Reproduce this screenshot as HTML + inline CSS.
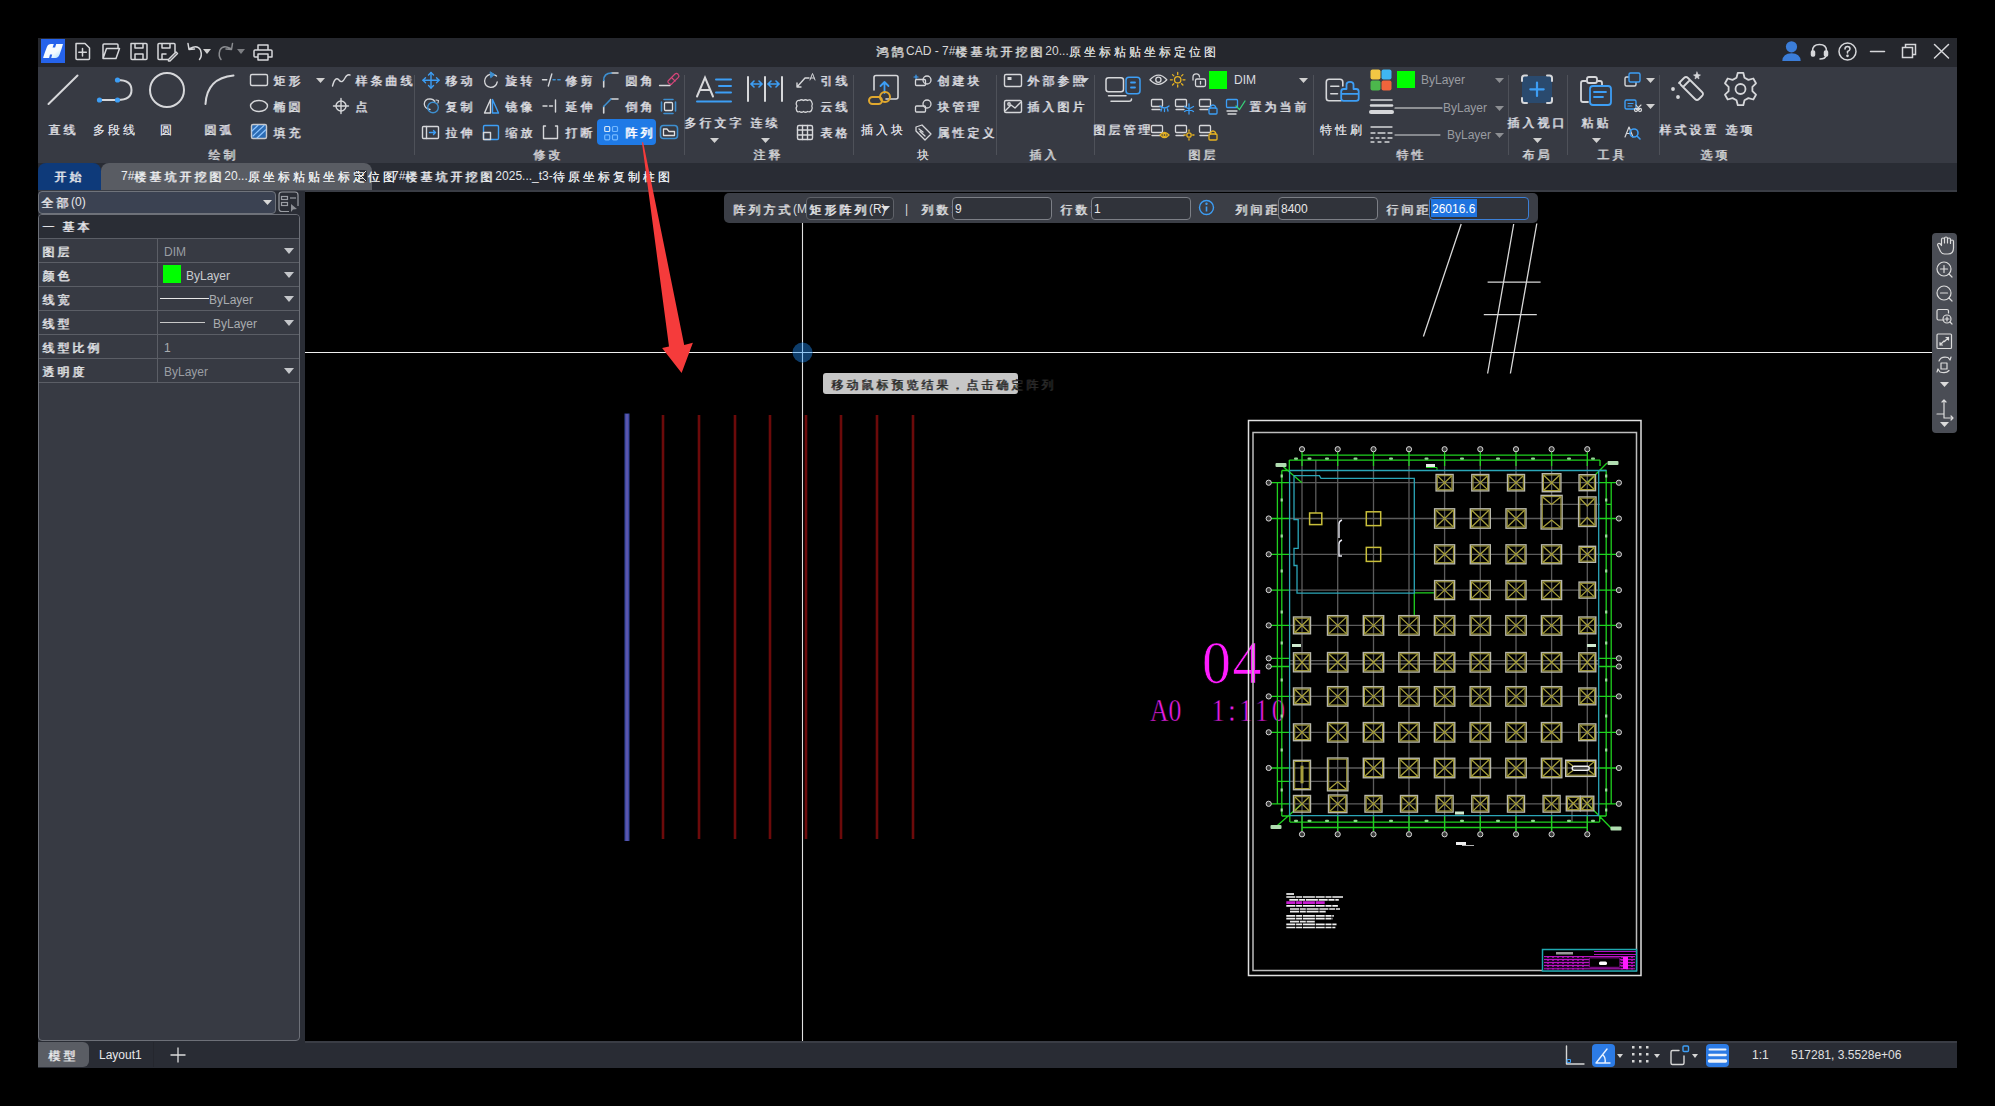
<!DOCTYPE html>
<html><head><meta charset="utf-8">
<style>
*{margin:0;padding:0;box-sizing:border-box}
html,body{width:1995px;height:1106px;background:#000;overflow:hidden;font-family:"Liberation Sans",sans-serif;color:#d4d6da;font-size:12px}
.a{position:absolute}
.t{position:absolute;white-space:nowrap;font-size:12px}
.cj{position:relative;top:1px;text-shadow:0.6px 0 0 currentColor}
svg{position:absolute;overflow:visible}
</style></head><body>
<div class="a" style="left:38px;top:38px;width:1919px;height:29px;background:#25272d;"></div>
<svg style="left:41px;top:39px" width="24" height="24" viewBox="0 0 24 24"><defs><linearGradient id="lg" x1="0" y1="0" x2="1" y2="1"><stop offset="0" stop-color="#ffffff"/><stop offset="0.6" stop-color="#f2fbff"/><stop offset="1" stop-color="#9fdcff"/></linearGradient></defs><rect width="24" height="24" fill="#2563eb"/><path d="M2.2 18.6 Q3.5 14 5.8 8.2 Q7 5 10 5 H12.8 L11.6 8.6 H14.1 L15.2 5 H22 Q20.5 10.5 18.6 15.6 Q17.4 19 14.5 19 H10.2 L11.2 15.6 H9 L8.1 19 H2.2Z" fill="url(#lg)"/></svg>
<svg style="left:70px;top:40px" width="210" height="24" viewBox="70 40 210 24" fill="none" stroke="#d6d7da" stroke-width="1.5" stroke-linejoin="round" stroke-linecap="round">
<path d="M76 43.5 H85 L89.5 48 V58.5 Q89.5 59.5 88.5 59.5 H77 Q76 59.5 76 58.5 V44.5 Q76 43.5 77 43.5Z"/><path d="M82.5 48.5 V56 M78.8 52.2 H86.3"/>
<path d="M103 58.5 V45 Q103 44 104 44 H117 Q118 44 118 45 V48 M103 58.5 L106.5 48.5 H119.5 L116 58.5 Z"/>
<path d="M131 43.5 H146 Q147 43.5 147 44.5 V58.5 Q147 59.5 146 59.5 H132 Q131 59.5 131 58.5Z M135 43.5 V48 H143 V43.5 M135 59.5 V54 H143 V59.5"/>
<path d="M168 59.5 H159 Q158 59.5 158 58.5 V44.5 Q158 43.5 159 43.5 H174 Q175 43.5 175 44.5 V52 M162 43.5 V48 H170 V43.5 M162 59.5 V54 H166"/><path d="M168.5 59.5 L176 52 L177.5 53.5 L170 61 H168.5Z"/>
<path d="M199.5 59.5 Q202.5 56 200.5 50 Q197.5 44.5 190 48.5 M188 43.5 L189 49.5 L194.5 49"/>
<path d="M221 59.5 Q218 56 220 50 Q223 44.5 230.5 48.5 M232.5 43.5 L231.5 49.5 L226 49" stroke="#8a8c90"/>
<path d="M258 50 V45 H268 V50 M255 50 H271 Q272 50 272 51 V57 H268 M258 57 H255 Q254 57 254 56 V51 Q254 50 255 50 M258 54 H268 V60 H258Z"/>
</svg>
<svg style="left:203.0px;top:48.5px" width="8" height="5" viewBox="0 0 8 5"><path d="M0 0H8L4.0 5Z" fill="#d0d0d0"/></svg>
<svg style="left:237.0px;top:48.5px" width="8" height="5" viewBox="0 0 8 5"><path d="M0 0H8L4.0 5Z" fill="#7d7f83"/></svg>
<div class="t" style="left:876px;width:300px;text-align:center;top:43.0px;line-height:16px;font-size:12px;color:#d8d8d8;"><span class="cj" style="letter-spacing:3px">鸿鹄</span>CAD - 7#<span class="cj" style="letter-spacing:3px">楼基坑开挖图</span>20...<span class="cj" style="letter-spacing:3px">原坐标粘贴坐标定位图</span></div>
<svg style="left:1780px;top:40px" width="175" height="24" viewBox="1780 40 175 24" fill="none" stroke="#d6d7da" stroke-width="1.5" stroke-linecap="round">
<circle cx="1791.5" cy="46.8" r="5.6" fill="#3b7dd8" stroke="none"/><path d="M1782.3 61 Q1782.8 53.3 1791.5 53.3 Q1800.2 53.3 1800.7 61Z" fill="#3b7dd8" stroke="none"/>
<path d="M1812.5 54 V51 Q1812.5 44.5 1819.5 44.5 Q1826.5 44.5 1826.5 51 V54"/><rect x="1811.5" y="51" width="3" height="5" rx="1" fill="#d6d7da"/><rect x="1824.5" y="51" width="3" height="5" rx="1" fill="#d6d7da"/><path d="M1826 56 Q1825 59 1820 59"/>
<circle cx="1847.5" cy="51.5" r="8.5"/><path d="M1845 49 Q1845 46.5 1847.5 46.5 Q1850 46.5 1850 49 Q1850 50.5 1847.5 51.5 V53"/><circle cx="1847.5" cy="55.8" r="0.6" fill="#d6d7da"/>
<path d="M1870.5 51.5 H1884.5"/>
<path d="M1902.5 47.5 H1912.5 V57.5 H1902.5Z M1905.5 47.5 V44.5 H1915.5 V54.5 H1912.5"/>
<path d="M1934.5 44.5 L1948.5 58 M1948.5 44.5 L1934.5 58"/>
</svg>
<div class="a" style="left:38px;top:67px;width:1919px;height:96px;background:#373a43;"></div>
<svg style="left:38px;top:67px" width="380" height="50" viewBox="38 67 380 50" fill="none" stroke="#d6d7da" stroke-width="2" stroke-linecap="round">
<path d="M48.5 104 L77.5 75.5"/>
<path d="M99.5 100 H117.5 Q131.5 100 131.5 90 Q131.5 80 117.5 80"/>
<circle cx="99.5" cy="100" r="2.6" fill="#3d9ef5" stroke="none"/><circle cx="117.5" cy="100" r="2.6" fill="#3d9ef5" stroke="none"/><circle cx="117.5" cy="80" r="2.6" fill="#3d9ef5" stroke="none"/>
<circle cx="167" cy="90" r="17"/>
<path d="M205.5 104 Q207 78 233.5 75.5"/>
</svg>
<div class="t" style="left:-87px;width:300px;text-align:center;top:121.0px;line-height:16px;font-size:12px;color:#dcdde0;"><span class="cj" style="letter-spacing:3px">直线</span></div>
<div class="t" style="left:-35px;width:300px;text-align:center;top:121.0px;line-height:16px;font-size:12px;color:#dcdde0;"><span class="cj" style="letter-spacing:3px">多段线</span></div>
<div class="t" style="left:17px;width:300px;text-align:center;top:121.0px;line-height:16px;font-size:12px;color:#dcdde0;"><span class="cj" style="letter-spacing:3px">圆</span></div>
<div class="t" style="left:69px;width:300px;text-align:center;top:121.0px;line-height:16px;font-size:12px;color:#dcdde0;"><span class="cj" style="letter-spacing:3px">圆弧</span></div>
<svg style="left:245px;top:70px" width="110" height="70" viewBox="245 70 110 70" fill="none" stroke="#d6d7da" stroke-width="1.4" stroke-linecap="round" stroke-linejoin="round">
<rect x="250.5" y="74.5" width="17" height="11" rx="1.5"/>
<ellipse cx="259" cy="106" rx="8.5" ry="5.5"/>
<rect x="251.5" y="124.5" width="15" height="14" rx="1.5" stroke="#c7c8cb" fill="#2b6bb3"/>
<path d="M253 136 L264 125.5 M257 138 L265.5 130 M252 131 L258 125.3" stroke="#8fc5ff" stroke-width="1.2"/>
<path d="M332.5 86 Q335 76 339 80 Q342 84 345 78 Q347 74 350 75"/>
<circle cx="341" cy="106" r="5"/><path d="M341 98.5 V113.5 M333.5 106 H348.5"/>
</svg>
<div class="t" style="left:273px;top:72.0px;line-height:16px;font-size:12px;color:#dcdde0;"><span class="cj" style="letter-spacing:3px">矩形</span></div>
<div class="t" style="left:273px;top:98.0px;line-height:16px;font-size:12px;color:#dcdde0;"><span class="cj" style="letter-spacing:3px">椭圆</span></div>
<div class="t" style="left:273px;top:124.0px;line-height:16px;font-size:12px;color:#dcdde0;"><span class="cj" style="letter-spacing:3px">填充</span></div>
<svg style="left:315.5px;top:77.5px" width="9" height="5" viewBox="0 0 9 5"><path d="M0 0H9L4.5 5Z" fill="#d0d0d0"/></svg>
<div class="t" style="left:355px;top:72.0px;line-height:16px;font-size:12px;color:#dcdde0;"><span class="cj" style="letter-spacing:3px">样条曲线</span></div>
<div class="t" style="left:355px;top:98.0px;line-height:16px;font-size:12px;color:#dcdde0;"><span class="cj" style="letter-spacing:3px">点</span></div>
<div class="t" style="left:73px;width:300px;text-align:center;top:146.0px;line-height:16px;font-size:12px;color:#d0d1d4;"><span class="cj" style="letter-spacing:3px">绘制</span></div>
<div class="a" style="left:414px;top:75px;width:1px;height:80px;background:#4e5159;"></div>
<div class="a" style="left:597px;top:119px;width:59px;height:26px;background:#1f7ae6;border-radius:4px"></div>
<svg style="left:418px;top:70px" width="265" height="72" viewBox="418 70 265 72" fill="none" stroke="#d6d7da" stroke-width="1.4" stroke-linecap="round" stroke-linejoin="round">
<path d="M431 72.5 V88 M423 80.3 H439" stroke="#3d9ef5"/><path d="M428.5 75 L431 72.5 L433.5 75 M428.5 85.5 L431 88 L433.5 85.5 M425.5 77.8 L423 80.3 L425.5 82.8 M436.5 77.8 L439 80.3 L436.5 82.8" stroke="#3d9ef5"/>
<path d="M496.5 76 Q493.5 73.5 490 74.3 Q485 75.8 484.6 81 Q484.8 86.5 490.5 87.3 Q496 87.5 497.2 82" stroke="#d6d7da" stroke-width="1.3"/><path d="M490.5 72 L494.5 74.5 L491 77.5Z" fill="#3d8fd0" stroke="#3d8fd0" stroke-width="1"/>
<path d="M542.5 79.8 H546.8 M548.3 86 L551.8 74" stroke="#d6d7da" stroke-width="1.4"/><path d="M553 79.8 H555.2 M557.8 79.8 H560.2" stroke="#3d8fd0" stroke-width="1.4"/>
<path d="M603.7 87 V80.5 M611.5 73 H618" stroke="#d6d7da" stroke-width="1.6"/><path d="M603.7 80.5 Q603.7 73 611.5 73" stroke="#3d8fd0" stroke-width="1.6"/>
<path d="M659.5 85.5 H670" stroke="#d6d7da" stroke-width="1.3"/><path d="M668.5 80.5 L675 74 Q676.5 72.8 677.8 74 L678.5 74.8 Q679.6 76 678.4 77.3 L672 83.7 Q670.6 85 669.3 83.7 L668.5 82.9 Q667.3 81.6 668.5 80.5Z M671.5 77.5 L675.2 81.2" stroke="#d8457a" stroke-width="1.2"/>
<path d="M430 109.5 Q424.5 108.5 424.3 104 Q424.5 98.8 430 98.8 Q433.5 99 434.8 101.5" stroke="#d6d7da" stroke-width="1.3"/><circle cx="433" cy="107.5" r="5.3" stroke="#3d8fd0" stroke-width="1.4"/><path d="M436 100 L438.5 100.5 L438 103" stroke="#d6d7da" stroke-width="1.1"/>
<path d="M484.5 113 L490.5 99.5 V113Z"/><path d="M492.5 113 V99.5 L498.5 113Z" stroke="#3d9ef5"/>
<path d="M543 106 H547 M549.5 106 H552.5 M555.5 100 V112"/>
<path d="M603.7 113 V106.5 M611 99 H618" stroke="#d6d7da" stroke-width="1.6"/><path d="M603.7 106.5 L611 99" stroke="#3d8fd0" stroke-width="1.6"/>
<rect x="664.5" y="102.5" width="8" height="8" rx="1" stroke="#e0e0e0" stroke-width="1.3"/><path d="M661.5 102 V111 M675.5 102 V111 M664 99.5 H673 M664 113.5 H673" stroke="#3d8fd0" stroke-width="1.6"/>
<rect x="422.5" y="126.5" width="16" height="12" rx="1"/><path d="M426.5 126.5 V138.5" stroke="#d6d7da"/><path d="M429.5 132.5 H435.5 M433.5 130.5 L435.5 132.5 L433.5 134.5" stroke="#3d9ef5"/>
<rect x="483.5" y="125.5" width="15" height="14" rx="1.2" stroke="#3d9ef5"/><rect x="483.5" y="132.5" width="7" height="7" stroke="#d6d7da"/>
<path d="M545.5 126 H543.5 V138.5 H557.5 V126 H555.5"/>
<rect x="604.7" y="126.5" width="5" height="5" rx="1" stroke="#d8e6f5" stroke-width="1.2"/><rect x="612.5" y="126.5" width="5" height="5" rx="1" stroke="#74b8ff" stroke-width="1.2"/><rect x="604.7" y="134.8" width="5" height="5" rx="1" stroke="#74b8ff" stroke-width="1.2"/><rect x="612.5" y="134.8" width="5" height="5" rx="1" stroke="#74b8ff" stroke-width="1.2"/>
<rect x="660.5" y="125.5" width="17" height="13" rx="3" stroke="#3d8fd0" stroke-width="1.6"/><path d="M663.5 135.5 V129 H667 L669 131.5 H674.5 V135.5Z" stroke="#e0e0e0" stroke-width="1.3"/>
</svg>
<div class="t" style="left:445px;top:72.0px;line-height:16px;font-size:12px;color:#dcdde0;"><span class="cj" style="letter-spacing:3px">移动</span></div>
<div class="t" style="left:505px;top:72.0px;line-height:16px;font-size:12px;color:#dcdde0;"><span class="cj" style="letter-spacing:3px">旋转</span></div>
<div class="t" style="left:565px;top:72.0px;line-height:16px;font-size:12px;color:#dcdde0;"><span class="cj" style="letter-spacing:3px">修剪</span></div>
<div class="t" style="left:625px;top:72.0px;line-height:16px;font-size:12px;color:#dcdde0;"><span class="cj" style="letter-spacing:3px">圆角</span></div>
<div class="t" style="left:445px;top:98.0px;line-height:16px;font-size:12px;color:#dcdde0;"><span class="cj" style="letter-spacing:3px">复制</span></div>
<div class="t" style="left:505px;top:98.0px;line-height:16px;font-size:12px;color:#dcdde0;"><span class="cj" style="letter-spacing:3px">镜像</span></div>
<div class="t" style="left:565px;top:98.0px;line-height:16px;font-size:12px;color:#dcdde0;"><span class="cj" style="letter-spacing:3px">延伸</span></div>
<div class="t" style="left:625px;top:98.0px;line-height:16px;font-size:12px;color:#dcdde0;"><span class="cj" style="letter-spacing:3px">倒角</span></div>
<div class="t" style="left:445px;top:124.0px;line-height:16px;font-size:12px;color:#dcdde0;"><span class="cj" style="letter-spacing:3px">拉伸</span></div>
<div class="t" style="left:505px;top:124.0px;line-height:16px;font-size:12px;color:#dcdde0;"><span class="cj" style="letter-spacing:3px">缩放</span></div>
<div class="t" style="left:565px;top:124.0px;line-height:16px;font-size:12px;color:#dcdde0;"><span class="cj" style="letter-spacing:3px">打断</span></div>
<div class="t" style="left:625px;top:124.0px;line-height:16px;font-size:12px;color:#ffffff;"><span class="cj" style="letter-spacing:3px">阵列</span></div>
<div class="t" style="left:398px;width:300px;text-align:center;top:146.0px;line-height:16px;font-size:12px;color:#d0d1d4;"><span class="cj" style="letter-spacing:3px">修改</span></div>
<div class="a" style="left:684px;top:75px;width:1px;height:80px;background:#4e5159;"></div>
<svg style="left:690px;top:70px" width="160" height="75" viewBox="690 70 160 75" fill="none" stroke="#d6d7da" stroke-width="2" stroke-linecap="round">
<path d="M697 96.5 L705 77.5 L713 96.5 M700 90 H710"/>
<path d="M716 79.5 H731 M719 86 H731 M716 92.5 H731" stroke="#3d9ef5"/>
<path d="M697 101.5 H731" stroke="#3d9ef5"/>
<path d="M748 77 V101 M765 77 V101 M782 77 V101" />
<path d="M751 84 H762 M768 84 H779 M754 81 L751 84 L754 87 M759 81 L762 84 L759 87 M771 81 L768 84 L771 87 M776 81 L779 84 L776 87" stroke="#3d9ef5" stroke-width="1.6"/>
</svg>
<div class="t" style="left:564px;width:300px;text-align:center;top:114.0px;line-height:16px;font-size:12px;color:#dcdde0;"><span class="cj" style="letter-spacing:3px">多行文字</span></div>
<svg style="left:709.5px;top:137.5px" width="9" height="5" viewBox="0 0 9 5"><path d="M0 0H9L4.5 5Z" fill="#d0d0d0"/></svg>
<div class="t" style="left:615px;width:300px;text-align:center;top:114.0px;line-height:16px;font-size:12px;color:#dcdde0;"><span class="cj" style="letter-spacing:3px">连续</span></div>
<svg style="left:760.5px;top:137.5px" width="9" height="5" viewBox="0 0 9 5"><path d="M0 0H9L4.5 5Z" fill="#d0d0d0"/></svg>
<svg style="left:792px;top:70px" width="25" height="72" viewBox="792 70 25 72" fill="none" stroke="#d6d7da" stroke-width="1.4" stroke-linecap="round" stroke-linejoin="round">
<path d="M797 87 L805 78 H809 M797 87 V83 M797 87 H801"/><path d="M810 80 L812.5 73.5 L815 80 M811 78 H814" stroke-width="1"/>
<path d="M799.5 100.5 Q801.5 99 803.5 100.5 Q805.5 99 807.5 100.5 Q810 99 811.5 101.5 Q813 104 811.8 106 Q813 108.5 811.5 110.5 Q810 112.5 807.5 111.5 Q805.5 113 803.5 111.5 Q801.5 113 799.5 111.5 Q797 112.5 796.5 110 Q795.5 108 797 106 Q795.5 104 796.5 102 Q797.5 100 799.5 100.5Z" stroke-width="1.3"/>
<rect x="797.5" y="125.5" width="15" height="14" rx="1.5"/><path d="M797.5 130 H812.5 M797.5 135 H812.5 M802.5 125.5 V139.5 M807.5 125.5 V139.5"/>
</svg>
<div class="t" style="left:820px;top:72.0px;line-height:16px;font-size:12px;color:#dcdde0;"><span class="cj" style="letter-spacing:3px">引线</span></div>
<div class="t" style="left:820px;top:98.0px;line-height:16px;font-size:12px;color:#dcdde0;"><span class="cj" style="letter-spacing:3px">云线</span></div>
<div class="t" style="left:820px;top:124.0px;line-height:16px;font-size:12px;color:#dcdde0;"><span class="cj" style="letter-spacing:3px">表格</span></div>
<div class="t" style="left:618px;width:300px;text-align:center;top:146.0px;line-height:16px;font-size:12px;color:#d0d1d4;"><span class="cj" style="letter-spacing:3px">注释</span></div>
<div class="a" style="left:853px;top:75px;width:1px;height:80px;background:#4e5159;"></div>
<svg style="left:860px;top:70px" width="135" height="72" viewBox="860 70 135 72" fill="none" stroke="#d6d7da" stroke-width="1.6" stroke-linecap="round" stroke-linejoin="round">
<path d="M874 90 V77.5 Q874 75.5 876 75.5 H896 Q898 75.5 898 77.5 V97 Q898 99 896 99 H886"/>
<path d="M884.5 93 V82 M880.5 86 L884.5 82 L888.5 86" stroke="#3d9ef5" stroke-width="1.8"/>
<rect x="869" y="97" width="13" height="7" rx="3.5" stroke="#e0a82e" stroke-width="2"/><circle cx="885" cy="97" r="5" stroke="#e0a82e" stroke-width="2"/>
<path d="M916 75 V79 M914 77 H918" stroke="#3d9ef5" stroke-width="1.2"/>
<rect x="915.5" y="79.5" width="10" height="6" rx="1" stroke-width="1.3"/><circle cx="927" cy="80" r="4" stroke-width="1.3"/>
<rect x="915.5" y="106" width="10" height="6" rx="1" stroke-width="1.3"/><circle cx="927" cy="104" r="4" stroke-width="1.3"/>
<path d="M916 127 L922 125 L931 134 L925 140 L916 131Z M919 129 L923 132 M920 131.5 L925 136" stroke-width="1.3"/>
</svg>
<div class="t" style="left:733px;width:300px;text-align:center;top:121.0px;line-height:16px;font-size:12px;color:#dcdde0;"><span class="cj" style="letter-spacing:3px">插入块</span></div>
<div class="t" style="left:937px;top:72.0px;line-height:16px;font-size:12px;color:#dcdde0;"><span class="cj" style="letter-spacing:3px">创建块</span></div>
<div class="t" style="left:937px;top:98.0px;line-height:16px;font-size:12px;color:#dcdde0;"><span class="cj" style="letter-spacing:3px">块管理</span></div>
<div class="t" style="left:937px;top:124.0px;line-height:16px;font-size:12px;color:#dcdde0;"><span class="cj" style="letter-spacing:3px">属性定义</span></div>
<div class="t" style="left:774px;width:300px;text-align:center;top:146.0px;line-height:16px;font-size:12px;color:#d0d1d4;"><span class="cj" style="letter-spacing:3px">块</span></div>
<div class="a" style="left:996px;top:75px;width:1px;height:80px;background:#4e5159;"></div>
<svg style="left:1000px;top:70px" width="30" height="50" viewBox="1000 70 30 50" fill="none" stroke="#d6d7da" stroke-width="1.4" stroke-linejoin="round">
<rect x="1004.5" y="74.5" width="17" height="12" rx="1.5"/><rect x="1007.5" y="77" width="4" height="3" fill="#d6d7da" stroke="none"/>
<rect x="1004.5" y="100.5" width="17" height="12" rx="1.5"/><path d="M1005 111 L1011 105 L1015 108 L1021 102" /><circle cx="1009" cy="104" r="1.2"/>
</svg>
<div class="t" style="left:1027px;top:72.0px;line-height:16px;font-size:12px;color:#dcdde0;"><span class="cj" style="letter-spacing:3px">外部参照</span></div>
<svg style="left:1079.5px;top:77.5px" width="9" height="5" viewBox="0 0 9 5"><path d="M0 0H9L4.5 5Z" fill="#d0d0d0"/></svg>
<div class="t" style="left:1027px;top:98.0px;line-height:16px;font-size:12px;color:#dcdde0;"><span class="cj" style="letter-spacing:3px">插入图片</span></div>
<div class="t" style="left:894px;width:300px;text-align:center;top:146.0px;line-height:16px;font-size:12px;color:#d0d1d4;"><span class="cj" style="letter-spacing:3px">插入</span></div>
<div class="a" style="left:1094px;top:75px;width:1px;height:80px;background:#4e5159;"></div>
<svg style="left:1100px;top:68px" width="210" height="75" viewBox="1100 68 210 75" fill="none" stroke="#d6d7da" stroke-width="1.5" stroke-linecap="round" stroke-linejoin="round">
<rect x="1106" y="77.8" width="17.5" height="14" rx="2.5"/><path d="M1108.5 95.8 H1126 M1111 101.3 H1129 Q1131.5 101.3 1131.5 99"/>
<rect x="1126" y="77.2" width="14" height="16.5" rx="3" stroke="#3d9ef5"/><path d="M1131 82.5 H1135 M1131 87.5 H1135" stroke="#3d9ef5" stroke-width="1.8"/>
<path d="M1150 79.8 Q1158.4 70.5 1166.8 79.8 Q1158.4 89 1150 79.8Z" stroke-width="1.3"/><circle cx="1158.4" cy="79.8" r="2.6" stroke-width="1.3"/>
<circle cx="1177.7" cy="79.8" r="3.2" stroke="#e6b323" stroke-width="1.3"/><path d="M1177.7 72.5 V74.5 M1177.7 85 V87 M1170.4 79.8 H1172.4 M1183 79.8 H1185 M1172.5 74.6 L1173.8 75.9 M1181.6 83.7 L1182.9 85 M1182.9 74.6 L1181.6 75.9 M1173.8 83.7 L1172.5 85" stroke="#e6b323" stroke-width="1.3"/>
<path d="M1193 80 V77 Q1193 73.8 1196.3 73.8 Q1199.5 73.8 1199.5 77" stroke-width="1.3"/><rect x="1195.5" y="79" width="10" height="7.5" rx="1.5" stroke-width="1.3"/><path d="M1200.5 81.5 V84" stroke-width="1.3"/>
</svg>
<div class="a" style="left:1209px;top:71px;width:18px;height:18px;background:#00ff00;"></div>
<div class="t" style="left:1234px;top:72.0px;line-height:16px;font-size:12px;color:#dcdde0;">DIM</div>
<svg style="left:1298.5px;top:77.5px" width="9" height="5" viewBox="0 0 9 5"><path d="M0 0H9L4.5 5Z" fill="#d0d0d0"/></svg>
<svg style="left:1149px;top:97px" width="24" height="20" viewBox="1149 97 24 20" fill="none" stroke="#d6d7da" stroke-width="1.3" stroke-linecap="round" stroke-linejoin="round"><rect x="1151.5" y="99.5" width="11" height="7" rx="1"/><path d="M1152 109.5 H1160"/><path d="M1160 106 Q1164.5 110 1169 106 M1161.5 109 L1161 111 M1164.5 109.5 V111.5 M1167.5 109 L1168 111" stroke="#3d9ef5"/></svg>
<svg style="left:1173px;top:97px" width="24" height="20" viewBox="1173 97 24 20" fill="none" stroke="#d6d7da" stroke-width="1.3" stroke-linecap="round" stroke-linejoin="round"><rect x="1175.5" y="99.5" width="11" height="7" rx="1"/><path d="M1176 109.5 H1184"/><path d="M1189 104 V114 M1184.5 106.5 L1193.5 111.5 M1193.5 106.5 L1184.5 111.5" stroke="#3d9ef5"/></svg>
<svg style="left:1197px;top:97px" width="24" height="20" viewBox="1197 97 24 20" fill="none" stroke="#d6d7da" stroke-width="1.3" stroke-linecap="round" stroke-linejoin="round"><rect x="1199.5" y="99.5" width="11" height="7" rx="1"/><path d="M1200 109.5 H1208"/><rect x="1209" y="108" width="8" height="6" rx="1" stroke="#3d9ef5"/><path d="M1210.5 108 V106.5 Q1213 103.5 1215.5 106.5 V108" stroke="#3d9ef5"/></svg>
<svg style="left:1224px;top:97px" width="24" height="20" viewBox="1224 97 24 20" fill="none" stroke="#3d9ef5" stroke-width="1.3" stroke-linecap="round"><rect x="1226.5" y="99.5" width="11" height="8" rx="1"/><path d="M1227 111 H1237 M1228 114 H1236" stroke="#d6d7da"/><path d="M1236 106 L1239.5 109.5 L1245 101" stroke="#37d27a"/></svg>
<div class="t" style="left:1249px;top:98.0px;line-height:16px;font-size:12px;color:#dcdde0;"><span class="cj" style="letter-spacing:3px">置为当前</span></div>
<svg style="left:1149px;top:123px" width="24" height="20" viewBox="1149 123 24 20" fill="none" stroke="#d6d7da" stroke-width="1.3" stroke-linecap="round" stroke-linejoin="round"><rect x="1151.5" y="125.5" width="11" height="7" rx="1"/><path d="M1152 135.5 H1160"/><path d="M1160 135 Q1164.5 130 1169 135 Q1164.5 140 1160 135Z" stroke="#e6b323"/><circle cx="1164.5" cy="135" r="1.5" stroke="#e6b323"/></svg>
<svg style="left:1173px;top:123px" width="24" height="20" viewBox="1173 123 24 20" fill="none" stroke="#d6d7da" stroke-width="1.3" stroke-linecap="round" stroke-linejoin="round"><rect x="1175.5" y="125.5" width="11" height="7" rx="1"/><path d="M1176 135.5 H1184"/><circle cx="1189" cy="135" r="2.2" stroke="#e6b323"/><path d="M1189 130 V131.3 M1189 138.7 V140 M1184 135 H1185.3 M1192.7 135 H1194" stroke="#e6b323"/></svg>
<svg style="left:1197px;top:123px" width="24" height="20" viewBox="1197 123 24 20" fill="none" stroke="#d6d7da" stroke-width="1.3" stroke-linecap="round" stroke-linejoin="round"><rect x="1199.5" y="125.5" width="11" height="7" rx="1"/><path d="M1200 135.5 H1208"/><rect x="1209" y="134" width="8" height="6" rx="1" stroke="#e6b323"/><path d="M1210.5 134 V132.5 Q1213 129.5 1215.5 132.5 V134" stroke="#e6b323"/></svg>
<div class="t" style="left:973px;width:300px;text-align:center;top:121.0px;line-height:16px;font-size:12px;color:#dcdde0;"><span class="cj" style="letter-spacing:3px">图层管理</span></div>
<div class="t" style="left:1053px;width:300px;text-align:center;top:146.0px;line-height:16px;font-size:12px;color:#d0d1d4;"><span class="cj" style="letter-spacing:3px">图层</span></div>
<div class="a" style="left:1313px;top:75px;width:1px;height:80px;background:#4e5159;"></div>
<svg style="left:1320px;top:68px" width="190" height="78" viewBox="1320 68 190 78" fill="none" stroke="#d6d7da" stroke-width="1.6" stroke-linecap="round" stroke-linejoin="round">
<path d="M1341 100.8 H1329 Q1326.3 100.8 1326.3 98 V82 Q1326.3 79.3 1329 79.3 H1340 Q1342.8 79.3 1342.8 82 V86"/><path d="M1330.8 86.2 H1338.8 M1330.8 93.7 H1337.5"/>
<path d="M1341.2 98.5 V91.5 Q1341.2 89 1343.7 89 H1346.5 V84.5 Q1346.5 81.8 1350 81.8 Q1353.5 81.8 1353.5 84.5 V89 H1356.2 Q1358.7 89 1358.7 91.5 V98.5 Q1358.7 100.8 1356.2 100.8 H1343.7 Q1341.2 100.8 1341.2 98.5Z M1341.2 93.8 H1358.7" stroke="#3d9ef5" stroke-width="1.8"/>
</svg>
<svg style="left:1370px;top:69px" width="23" height="22" viewBox="0 0 23 22"><rect x="0.5" y="0.5" width="10" height="10" rx="2" fill="#f2c744"/><rect x="11.5" y="0.5" width="10" height="10" rx="2" fill="#3fb6f0"/><rect x="0.5" y="11.5" width="10" height="10" rx="2" fill="#4cb84c"/><rect x="11.5" y="11.5" width="10" height="10" rx="2" fill="#f0643c"/></svg>
<div class="a" style="left:1397px;top:71px;width:18px;height:17px;background:#00ff00;"></div>
<div class="t" style="left:1421px;top:72.0px;line-height:16px;font-size:12px;color:#9a9ca1;">ByLayer</div>
<svg style="left:1494.5px;top:77.5px" width="9" height="5" viewBox="0 0 9 5"><path d="M0 0H9L4.5 5Z" fill="#8d8f93"/></svg>
<svg style="left:1368px;top:96px" width="80" height="50" viewBox="1368 96 80 50" fill="none" stroke="#d6d7da" stroke-linecap="round">
<path d="M1371 100 H1392" stroke-width="1.5"/><path d="M1371 105.5 H1392" stroke-width="2.5"/><path d="M1371 112 H1392" stroke-width="4"/>
<path d="M1395 108 H1442" stroke-width="1.2" stroke="#e6e6e6"/>
<path d="M1371 127 H1392 M1371 133 H1375 M1378 133 H1385 M1388 133 H1392 M1371 138 H1373 M1376 138 H1379 M1382 138 H1385 M1388 138 H1392 M1371 142 H1374 M1378 142 H1381 M1385 142 H1389" stroke-width="1.3"/>
<path d="M1395 135 H1440" stroke-width="1"/>
</svg>
<div class="t" style="left:1443px;top:100.0px;line-height:16px;font-size:12px;color:#9a9ca1;">ByLayer</div>
<svg style="left:1494.5px;top:105.5px" width="9" height="5" viewBox="0 0 9 5"><path d="M0 0H9L4.5 5Z" fill="#8d8f93"/></svg>
<div class="t" style="left:1447px;top:127.0px;line-height:16px;font-size:12px;color:#9a9ca1;">ByLayer</div>
<svg style="left:1494.5px;top:132.5px" width="9" height="5" viewBox="0 0 9 5"><path d="M0 0H9L4.5 5Z" fill="#8d8f93"/></svg>
<div class="t" style="left:1192px;width:300px;text-align:center;top:121.0px;line-height:16px;font-size:12px;color:#dcdde0;"><span class="cj" style="letter-spacing:3px">特性刷</span></div>
<div class="t" style="left:1261px;width:300px;text-align:center;top:146.0px;line-height:16px;font-size:12px;color:#d0d1d4;"><span class="cj" style="letter-spacing:3px">特性</span></div>
<div class="a" style="left:1508px;top:75px;width:1px;height:80px;background:#4e5159;"></div>
<svg style="left:1518px;top:72px" width="40" height="36" viewBox="1518 72 40 36" fill="none" stroke="#d6d7da" stroke-width="2" stroke-linecap="round">
<rect x="1522" y="76" width="30" height="27" rx="3" fill="#2a4a6e" stroke="none"/>
<path d="M1522 81 V78 Q1522 75.5 1524.5 75.5 H1527 M1547 75.5 H1549.5 Q1552 75.5 1552 78 V81 M1552 98 V100.5 Q1552 103 1549.5 103 H1547 M1527 103 H1524.5 Q1522 103 1522 100.5 V98"/>
<path d="M1537 82.5 V96 M1530.3 89.3 H1543.7" stroke="#3d9ef5" stroke-width="2.2"/>
</svg>
<div class="t" style="left:1387px;width:300px;text-align:center;top:114.0px;line-height:16px;font-size:12px;color:#dcdde0;"><span class="cj" style="letter-spacing:3px">插入视口</span></div>
<svg style="left:1532.5px;top:137.5px" width="9" height="5" viewBox="0 0 9 5"><path d="M0 0H9L4.5 5Z" fill="#d0d0d0"/></svg>
<div class="t" style="left:1387px;width:300px;text-align:center;top:146.0px;line-height:16px;font-size:12px;color:#d0d1d4;"><span class="cj" style="letter-spacing:3px">布局</span></div>
<div class="a" style="left:1567px;top:75px;width:1px;height:80px;background:#4e5159;"></div>
<svg style="left:1576px;top:70px" width="80" height="72" viewBox="1576 70 80 72" fill="none" stroke="#d6d7da" stroke-width="1.8" stroke-linecap="round" stroke-linejoin="round">
<path d="M1588 102 H1583 Q1581 102 1581 100 V83 Q1581 81 1583 81 H1586 M1598 81 H1600 Q1602 81 1602 83 V85"/><rect x="1587" y="77" width="10" height="6" rx="2"/>
<rect x="1590" y="86" width="21" height="19" rx="3" stroke="#3d9ef5" fill="#373a43"/><path d="M1594 92 H1606 M1594 97 H1603" stroke="#3d9ef5"/>
<rect x="1625" y="77" width="11" height="9" rx="1.5" stroke-width="1.4"/><rect x="1629" y="73" width="11" height="9" rx="1.5" stroke="#3d9ef5" stroke-width="1.4" fill="#373a43"/>
<rect x="1625" y="100" width="11" height="9" rx="1.5" stroke="#3d9ef5" stroke-width="1.4"/><path d="M1628 103.5 H1633 M1628 106 H1632" stroke="#3d9ef5" stroke-width="1.2"/><circle cx="1636" cy="110" r="1.6" stroke-width="1.1"/><circle cx="1640" cy="110" r="1.6" stroke-width="1.1"/><path d="M1636 105 L1640 110 M1641 105 L1636 110" stroke-width="1.1"/>
<path d="M1625 137 L1629 127 L1633 137 M1626.5 133.5 H1631.5" stroke-width="1.2"/><circle cx="1634" cy="133" r="4" stroke="#3d9ef5" stroke-width="1.6"/><path d="M1637 136 L1640 139" stroke="#3d9ef5" stroke-width="1.6"/>
</svg>
<svg style="left:1645.5px;top:77.5px" width="9" height="5" viewBox="0 0 9 5"><path d="M0 0H9L4.5 5Z" fill="#d0d0d0"/></svg>
<svg style="left:1645.5px;top:103.5px" width="9" height="5" viewBox="0 0 9 5"><path d="M0 0H9L4.5 5Z" fill="#d0d0d0"/></svg>
<div class="t" style="left:1446px;width:300px;text-align:center;top:114.0px;line-height:16px;font-size:12px;color:#dcdde0;"><span class="cj" style="letter-spacing:3px">粘贴</span></div>
<svg style="left:1591.5px;top:137.5px" width="9" height="5" viewBox="0 0 9 5"><path d="M0 0H9L4.5 5Z" fill="#d0d0d0"/></svg>
<div class="t" style="left:1462px;width:300px;text-align:center;top:146.0px;line-height:16px;font-size:12px;color:#d0d1d4;"><span class="cj" style="letter-spacing:3px">工具</span></div>
<div class="a" style="left:1659px;top:75px;width:1px;height:80px;background:#4e5159;"></div>
<svg style="left:1668px;top:70px" width="95" height="40" viewBox="1668 70 95 40" fill="none" stroke="#d6d7da" stroke-width="1.8" stroke-linecap="round" stroke-linejoin="round">
<path d="M1679 83 L1684 78 Q1686 76 1688 78 L1702 92 Q1704 94 1702 96 L1699 99 Q1697 101 1695 99 L1681 85 Q1679 83 1681 81Z M1683 87 L1690 80"/>
<path d="M1697 72 L1698 74.5 L1700.5 75 L1698.5 76.5 L1699 79 L1697 77.5 L1695 79 L1695.5 76.5 L1693.5 75 L1696 74.5Z" fill="#d6d7da" stroke-width="0.6"/>
<circle cx="1673" cy="89" r="1" fill="#d6d7da"/><circle cx="1678" cy="97" r="1" fill="#d6d7da"/>
<path d="M1737.8 72.8 L1743.3 72.8 L1744.5 77.7 L1748.4 79.9 L1753.3 78.5 L1756 83.3 L1752.4 86.8 L1752.4 91.2 L1756 94.7 L1753.3 99.5 L1748.4 98.1 L1744.5 100.3 L1743.3 105.2 L1737.8 105.2 L1736.5 100.3 L1732.6 98.1 L1727.7 99.5 L1725 94.7 L1728.6 91.2 L1728.6 86.8 L1725 83.3 L1727.7 78.5 L1732.6 79.9 L1736.5 77.7Z"/>
<circle cx="1740.5" cy="89" r="5"/>
</svg>
<div class="t" style="left:1539px;width:300px;text-align:center;top:121.0px;line-height:16px;font-size:12px;color:#dcdde0;"><span class="cj" style="letter-spacing:3px">样式设置</span></div>
<div class="t" style="left:1590px;width:300px;text-align:center;top:121.0px;line-height:16px;font-size:12px;color:#dcdde0;"><span class="cj" style="letter-spacing:3px">选项</span></div>
<div class="t" style="left:1565px;width:300px;text-align:center;top:146.0px;line-height:16px;font-size:12px;color:#d0d1d4;"><span class="cj" style="letter-spacing:3px">选项</span></div>
<div class="a" style="left:38px;top:163px;width:1919px;height:29px;background:#292c34;"></div>
<div class="a" style="left:38px;top:190px;width:1919px;height:2px;background:#3a3d45;"></div>
<div class="a" style="left:38px;top:163px;width:63px;height:27px;background:#0e3a7a;border-radius:8px 8px 0 0"></div>
<div class="t" style="left:-81px;width:300px;text-align:center;top:168.0px;line-height:16px;font-size:12px;color:#e6e8ec;"><span class="cj" style="letter-spacing:3px">开始</span></div>
<div class="a" style="left:101px;top:163px;width:271px;height:27px;background:#595c63;border-radius:8px 8px 0 0"></div>
<div class="a" style="left:355px;top:170px;width:12px;height:12px;background:#2d3038;border-radius:2px"></div>
<div class="t" style="left:121px;top:168.0px;line-height:16px;font-size:12px;color:#eceef0;">7#<span class="cj" style="letter-spacing:3px">楼基坑开挖图</span>20...<span class="cj" style="letter-spacing:3px">原坐标粘贴坐标定位图</span></div>
<svg style="left:355px;top:170px" width="12" height="12" viewBox="0 0 12 12" stroke="#e8e8e8" stroke-width="1"><path d="M1 1 L11 11 M11 1 L1 11"/></svg>
<div class="t" style="left:392px;top:168.0px;line-height:16px;font-size:12px;color:#e6e8ec;">7#<span class="cj" style="letter-spacing:3px">楼基坑开挖图</span>2025..._t3-<span class="cj" style="letter-spacing:3px">待原坐标复制柱图</span></div>
<div class="a" style="left:38px;top:191px;width:267px;height:851px;background:#2a2d35;"></div>
<div class="a" style="left:38px;top:191px;width:238px;height:23px;background:#3b4252;border:1px solid #6f737b;border-radius:4px"></div>
<div class="t" style="left:41px;top:194.0px;line-height:16px;font-size:12px;color:#e8e8ea;"><span class="cj" style="letter-spacing:3px">全部</span>(0)</div>
<svg style="left:262.5px;top:199.5px" width="9" height="5" viewBox="0 0 9 5"><path d="M0 0H9L4.5 5Z" fill="#d8d8d8"/></svg>
<svg style="left:278px;top:191px" width="21" height="22" viewBox="0 0 21 22" fill="none" stroke="#9a9da3" stroke-width="1.2"><path d="M11 20.5 H4 Q1 20.5 1 17.5 V4 Q1 1 4 1 H17 Q20 1 20 4 V15"/><rect x="3.5" y="5.5" width="6" height="3"/><rect x="3.5" y="11.5" width="6" height="3"/><path d="M12 7 H18"/><path d="M13 13 L19 18 L15 18.5 L13 21Z" fill="#8c8f95" stroke="none"/></svg>
<div class="a" style="left:38px;top:214px;width:262px;height:827px;background:#373a43;border:1px solid #6d7078;border-top:1px solid #6d7078;border-radius:4px"></div>
<div class="a" style="left:39px;top:215px;width:260px;height:23px;background:#2a2d35;border-radius:3px 3px 0 0"></div>
<div class="t" style="left:42px;top:218.0px;line-height:16px;font-size:12px;color:#e6e7ea;"><span class="cj" style="letter-spacing:3px">一</span></div>
<div class="t" style="left:62px;top:218.0px;line-height:16px;font-size:12px;color:#e6e7ea;"><span class="cj" style="letter-spacing:3px">基本</span></div>
<div class="a" style="left:39px;top:238px;width:260px;height:1px;background:#5b5e66;"></div>
<div class="t" style="left:42px;top:242.5px;line-height:16px;font-size:12px;color:#e3e4e7;"><span class="cj" style="letter-spacing:3px">图层</span></div>
<div class="a" style="left:39px;top:262px;width:260px;height:1px;background:#5b5e66;"></div>
<div class="t" style="left:42px;top:266.5px;line-height:16px;font-size:12px;color:#e3e4e7;"><span class="cj" style="letter-spacing:3px">颜色</span></div>
<div class="a" style="left:39px;top:286px;width:260px;height:1px;background:#5b5e66;"></div>
<div class="t" style="left:42px;top:290.5px;line-height:16px;font-size:12px;color:#e3e4e7;"><span class="cj" style="letter-spacing:3px">线宽</span></div>
<div class="a" style="left:39px;top:310px;width:260px;height:1px;background:#5b5e66;"></div>
<div class="t" style="left:42px;top:314.5px;line-height:16px;font-size:12px;color:#e3e4e7;"><span class="cj" style="letter-spacing:3px">线型</span></div>
<div class="a" style="left:39px;top:334px;width:260px;height:1px;background:#5b5e66;"></div>
<div class="t" style="left:42px;top:338.5px;line-height:16px;font-size:12px;color:#e3e4e7;"><span class="cj" style="letter-spacing:3px">线型比例</span></div>
<div class="a" style="left:39px;top:358px;width:260px;height:1px;background:#5b5e66;"></div>
<div class="t" style="left:42px;top:362.5px;line-height:16px;font-size:12px;color:#e3e4e7;"><span class="cj" style="letter-spacing:3px">透明度</span></div>
<div class="a" style="left:39px;top:382px;width:260px;height:1px;background:#5b5e66;"></div>
<div class="a" style="left:157px;top:238px;width:1px;height:145px;background:#5b5e66;"></div>
<div class="t" style="left:164px;top:243.5px;line-height:16px;font-size:12px;color:#9b9ea3;">DIM</div>
<div class="a" style="left:163px;top:265px;width:18px;height:18px;background:#00ff00;"></div>
<div class="t" style="left:186px;top:267.5px;line-height:16px;font-size:12px;color:#c9cbce;">ByLayer</div>
<div class="a" style="left:160px;top:298px;width:49px;height:1px;background:#e8e8e8;"></div>
<div class="t" style="left:209px;top:291.5px;line-height:16px;font-size:12px;color:#a9acb0;">ByLayer</div>
<div class="a" style="left:160px;top:322px;width:45px;height:1px;background:#c8c8c8;"></div>
<div class="t" style="left:213px;top:315.5px;line-height:16px;font-size:12px;color:#a9acb0;">ByLayer</div>
<div class="t" style="left:164px;top:339.5px;line-height:16px;font-size:12px;color:#a9acb0;">1</div>
<div class="t" style="left:164px;top:363.5px;line-height:16px;font-size:12px;color:#9b9ea3;">ByLayer</div>
<svg style="left:284.0px;top:248.0px" width="10" height="6" viewBox="0 0 10 6"><path d="M0 0H10L5.0 6Z" fill="#c4c6ca"/></svg>
<svg style="left:284.0px;top:272.0px" width="10" height="6" viewBox="0 0 10 6"><path d="M0 0H10L5.0 6Z" fill="#c4c6ca"/></svg>
<svg style="left:284.0px;top:296.0px" width="10" height="6" viewBox="0 0 10 6"><path d="M0 0H10L5.0 6Z" fill="#c4c6ca"/></svg>
<svg style="left:284.0px;top:320.0px" width="10" height="6" viewBox="0 0 10 6"><path d="M0 0H10L5.0 6Z" fill="#c4c6ca"/></svg>
<svg style="left:284.0px;top:368.0px" width="10" height="6" viewBox="0 0 10 6"><path d="M0 0H10L5.0 6Z" fill="#c4c6ca"/></svg>
<div class="a" style="left:305px;top:192px;width:1652px;height:849px;background:#000;"></div>
<svg style="left:305px;top:192px" width="1652" height="850" viewBox="305 192 1652 850" fill="none">
<path d="M627 413.5 V841" stroke="#34469e" stroke-width="5"/>
<path d="M627 414 V841" stroke="#5b56ad" stroke-width="2.6"/>
<path d="M663 415V839 M699 415V839 M735 415V839 M770 415V839 M806 415V839 M841 415V839 M877 415V839 M913 415V839" stroke="#6c0a0a" stroke-width="2.6"/>
<path d="M1461.2 224 L1423.4 336.5 M1513.7 224 L1487.6 373.5 M1536.8 223.5 L1510.4 373.5 M1487.6 282.2 H1540.6 M1483.8 314.6 H1536.8" stroke="#d8d8d8" stroke-width="1.3"/>
<path d="M305 352.5 H1932" stroke="#f0f0f0" stroke-width="1"/>
<path d="M802.5 223 V1041" stroke="#e0e0e0" stroke-width="1.1"/>
<circle cx="802.5" cy="352.5" r="10" fill="#0e3e6c"/>
<path d="M792.5 352.5 H812.5 M802.5 342.5 V362.5" stroke="#90c4f0" stroke-width="1.1"/>
</svg>
<svg style="left:600px;top:130px" width="120" height="260" viewBox="600 130 120 260"><path d="M641.9 142.2 L643.2 142.2 L684.2 344.9 L692.9 342.7 L681.6 373.1 L662.1 348.1 L669 346.5 Z" fill="#f53b3b"/></svg>
<div class="a" style="left:724px;top:193px;width:814px;height:30px;background:#3b3e46;border-radius:5px"></div>
<div class="t" style="left:733px;top:200.8px;line-height:16px;font-size:12px;color:#dadbde;"><span class="cj" style="letter-spacing:3px">阵列方式</span>(M)</div>
<div class="a" style="left:806px;top:197px;width:88px;height:23px;background:#30333a;border:1px solid #5f6269;border-radius:4px"></div>
<div class="t" style="left:809px;top:200.8px;line-height:16px;font-size:12px;color:#e6e7ea;"><span class="cj" style="letter-spacing:3px">矩形阵列</span>(R)</div>
<svg style="left:880.5px;top:206.3px" width="9" height="5" viewBox="0 0 9 5"><path d="M0 0H9L4.5 5Z" fill="#e0e0e0"/></svg>
<div class="t" style="left:905px;top:200.8px;line-height:16px;font-size:12px;color:#d8d8d8;">|</div>
<div class="t" style="left:921px;top:200.8px;line-height:16px;font-size:12px;color:#dadbde;"><span class="cj" style="letter-spacing:3px">列数</span>:</div>
<div class="a" style="left:952px;top:197px;width:100px;height:23px;background:#30333a;border:1px solid #7c7f86;border-radius:4px"></div>
<div class="t" style="left:955px;top:200.8px;line-height:16px;font-size:12px;color:#e8e8e8;">9</div>
<div class="t" style="left:1060px;top:200.8px;line-height:16px;font-size:12px;color:#dadbde;"><span class="cj" style="letter-spacing:3px">行数</span>:</div>
<div class="a" style="left:1091px;top:197px;width:100px;height:23px;background:#30333a;border:1px solid #7c7f86;border-radius:4px"></div>
<div class="t" style="left:1094px;top:200.8px;line-height:16px;font-size:12px;color:#e8e8e8;">1</div>
<svg style="left:1197px;top:199px" width="19" height="19" viewBox="0 0 19 19" fill="none" stroke="#3d9ef5" stroke-width="1.4"><circle cx="9.5" cy="8.5" r="7"/><path d="M9.5 7.5 V12.5" stroke-width="1.6"/><circle cx="9.5" cy="4.8" r="0.5" fill="#3d9ef5"/></svg>
<div class="t" style="left:1235px;top:200.8px;line-height:16px;font-size:12px;color:#dadbde;"><span class="cj" style="letter-spacing:3px">列间距</span>:</div>
<div class="a" style="left:1278px;top:197px;width:100px;height:23px;background:#30333a;border:1px solid #7c7f86;border-radius:4px"></div>
<div class="t" style="left:1281px;top:200.8px;line-height:16px;font-size:12px;color:#e8e8e8;">8400</div>
<div class="t" style="left:1386px;top:200.8px;line-height:16px;font-size:12px;color:#dadbde;"><span class="cj" style="letter-spacing:3px">行间距</span>:</div>
<div class="a" style="left:1429px;top:197px;width:100px;height:23px;background:#30333a;border:1px solid #3b7fd6;border-radius:4px"></div>
<div class="a" style="left:1431px;top:199px;width:46px;height:18px;background:#1f74e0;"></div>
<div class="t" style="left:1432px;top:200.8px;line-height:16px;font-size:12px;color:#ffffff;">26016.6</div>
<div class="a" style="left:823px;top:373px;width:195px;height:21px;background:#c6c6c6;border-radius:3px"></div>
<div class="t" style="left:831px;top:375.5px;line-height:16px;font-size:12px;color:#2a2a2a;"><span class="cj" style="letter-spacing:3px">移动鼠标预览结果，点击确定阵列</span></div>
<div class="a" style="left:1932px;top:233px;width:25px;height:200px;background:#4a4d55;border-radius:4px"></div>
<svg style="left:1932px;top:233px" width="25" height="200" viewBox="1932 233 25 200" fill="none" stroke="#dcdcdc" stroke-width="1.2" stroke-linecap="round" stroke-linejoin="round">
<path d="M1938 246 Q1937 244 1938.5 243.5 Q1940 243 1941.5 245.5 V239.5 Q1941.5 238 1943 238 Q1944.5 238 1944.5 239.5 V243 V238.5 Q1944.5 237 1946 237 Q1947.5 237 1947.5 238.5 V243 V239.5 Q1947.5 238 1949 238 Q1950.5 238 1950.5 239.5 V243.5 V241.5 Q1950.5 240 1952 240 Q1953.5 240 1953.5 241.5 V248 Q1953.5 254 1948 254 H1944.5 Q1942 254 1940.5 251.5Z"/>
<circle cx="1944" cy="269" r="7"/><path d="M1949 274 L1952 277 M1940.5 269 H1947.5 M1944 265.5 V272.5"/>
<circle cx="1944" cy="293" r="7"/><path d="M1949 298 L1952 301 M1940.5 293 H1947.5"/>
<path d="M1944 320 H1938.5 Q1937 320 1937 318.5 V311 Q1937 309.5 1938.5 309.5 H1947 Q1948.5 309.5 1948.5 311 V313"/><circle cx="1947" cy="319" r="4"/><path d="M1950 322 L1952 324 M1945 319 H1949 M1947 317 V321"/>
<rect x="1937" y="334" width="14.5" height="14.5" rx="1"/><path d="M1940 345 L1944 341 M1940 342.5 V345 H1942.5 M1948.5 337.5 L1944.5 341.5 M1946 337.5 H1948.5 V340"/>
<rect x="1941" y="363" width="6" height="6"/><path d="M1939 361 Q1941 356 1948 357.5 L1950 360 M1950 360 L1951 357 M1949 370.5 Q1946 374 1940 372 L1938 369 M1938 369 L1937 372"/>
<path d="M1944 400 V418 H1953 M1942 402 L1944 400 L1946 402 M1951 416 L1953 418 L1951 420 M1937 414 H1944" />
</svg>
<svg style="left:1939.5px;top:381.5px" width="9" height="5" viewBox="0 0 9 5"><path d="M0 0H9L4.5 5Z" fill="#dcdcdc"/></svg>
<svg style="left:1939.5px;top:421.5px" width="9" height="5" viewBox="0 0 9 5"><path d="M0 0H9L4.5 5Z" fill="#dcdcdc"/></svg>
<svg style="left:305px;top:192px" width="1652" height="850" viewBox="305 192 1652 850" fill="none"><text transform="translate(1202 682.5) scale(1.0 1.06)" font-family="Liberation Serif" font-size="58" fill="#ff1cff" stroke="#000" stroke-width="0.7" letter-spacing="1.5">04</text><text transform="translate(1150 721) scale(0.9 1.1)" font-family="Liberation Serif" font-size="28.5" fill="#e81ee8" stroke="#000" stroke-width="0.4">A0</text><text transform="translate(1211.5 721) scale(0.93 1.1)" font-family="Liberation Serif" font-size="28.5" fill="#e81ee8" stroke="#000" stroke-width="0.4" letter-spacing="3.8">1:110</text><rect x="1248.5" y="420.5" width="392.5" height="555" stroke="#e0e0e0" stroke-width="1.5"/><rect x="1253" y="432.5" width="383.5" height="538" stroke="#bdbdbd" stroke-width="1.5"/><path d="M1302 460V834 M1337.7 460V834 M1373.5 460V834 M1409 460V834 M1444.6 460V834 M1480.3 460V834 M1516 460V834 M1551.6 460V834 M1587.3 460V834 M1290 482.7H1599 M1290 518.5H1599 M1290 554.3H1599 M1290 590.1H1599 M1290 625.4H1599 M1290 660.6H1599 M1290 664H1599 M1290 696.4H1599 M1290 732.3H1599 M1290 768H1599 M1290 803.8H1599 M1315.8 460V513 M1540 504.4H1600 M1290 781.4H1350 M1572 803V822 " stroke="#5c5c5c" stroke-width="1.3"/><path d="M1302 455.1H1587.3 M1289.3 460.1H1600 M1600 460V466 M1289.3 460V470.5 M1289.8 822.1H1599.7 M1599.7 816V822 M1302 827.5H1587.3 M1289.8 816V822 M1277.4 482.7V803.8 M1281.8 470.5V816 M1281.8 816H1290 M1281.8 470.5H1289.5 M1611.2 482.7V803.8 M1606.2 470.5V816 M1599 816H1606.2 M1599 470.5H1606.2 M1302 452V466 M1302 816V831 M1337.7 452V466 M1337.7 816V831 M1373.5 452V466 M1373.5 816V831 M1409 452V466 M1409 816V831 M1444.6 452V466 M1444.6 816V831 M1480.3 452V466 M1480.3 816V831 M1516 452V466 M1516 816V831 M1551.6 452V466 M1551.6 816V831 M1587.3 452V466 M1587.3 816V831 M1271 482.7H1290 M1599 482.7H1616 M1271 518.5H1290 M1599 518.5H1616 M1271 554.3H1290 M1599 554.3H1616 M1271 590.1H1290 M1599 590.1H1616 M1271 625.4H1290 M1599 625.4H1616 M1271 658.3H1290 M1271 666.5H1290 M1599 658.3H1616 M1599 666.5H1616 M1271 696.4H1290 M1599 696.4H1616 M1271 732.3H1290 M1599 732.3H1616 M1271 768H1290 M1599 768H1616 M1271 803.8H1290 M1599 803.8H1616 M1277 781.4H1290 M1606 504.4H1611 M1281 464.8L1302 482.7 M1587.3 482.7L1607 463 M1276 826.8L1302 803.8 M1587.3 803.8L1612 829 M1414.3 592.9H1435 M1414.3 593V615.5 " stroke="#1fd11f" stroke-width="1.3"/><rect x="1294" y="457.5" width="4" height="2.2" rx="1" fill="#8fd88f"/><rect x="1294" y="819.8" width="4" height="2.2" rx="1" fill="#8fd88f"/><rect x="1307.5" y="457.5" width="4" height="2.2" rx="1" fill="#8fd88f"/><rect x="1307.5" y="819.8" width="4" height="2.2" rx="1" fill="#8fd88f"/><rect x="1325" y="457.5" width="4" height="2.2" rx="1" fill="#8fd88f"/><rect x="1325" y="819.8" width="4" height="2.2" rx="1" fill="#8fd88f"/><rect x="1353.5" y="457.5" width="4" height="2.2" rx="1" fill="#8fd88f"/><rect x="1353.5" y="819.8" width="4" height="2.2" rx="1" fill="#8fd88f"/><rect x="1389" y="457.5" width="4" height="2.2" rx="1" fill="#8fd88f"/><rect x="1389" y="819.8" width="4" height="2.2" rx="1" fill="#8fd88f"/><rect x="1424.5" y="457.5" width="4" height="2.2" rx="1" fill="#8fd88f"/><rect x="1424.5" y="819.8" width="4" height="2.2" rx="1" fill="#8fd88f"/><rect x="1460" y="457.5" width="4" height="2.2" rx="1" fill="#8fd88f"/><rect x="1460" y="819.8" width="4" height="2.2" rx="1" fill="#8fd88f"/><rect x="1496" y="457.5" width="4" height="2.2" rx="1" fill="#8fd88f"/><rect x="1496" y="819.8" width="4" height="2.2" rx="1" fill="#8fd88f"/><rect x="1531" y="457.5" width="4" height="2.2" rx="1" fill="#8fd88f"/><rect x="1531" y="819.8" width="4" height="2.2" rx="1" fill="#8fd88f"/><rect x="1567" y="457.5" width="4" height="2.2" rx="1" fill="#8fd88f"/><rect x="1567" y="819.8" width="4" height="2.2" rx="1" fill="#8fd88f"/><rect x="1591" y="457.5" width="4" height="2.2" rx="1" fill="#8fd88f"/><rect x="1591" y="819.8" width="4" height="2.2" rx="1" fill="#8fd88f"/><rect x="1280.6" y="474.5" width="2.2" height="3" fill="#9ee09e"/><rect x="1605.1" y="474.5" width="2.2" height="3" fill="#9ee09e"/><rect x="1280.6" y="498.5" width="2.2" height="3" fill="#9ee09e"/><rect x="1605.1" y="498.5" width="2.2" height="3" fill="#9ee09e"/><rect x="1280.6" y="534.5" width="2.2" height="3" fill="#9ee09e"/><rect x="1605.1" y="534.5" width="2.2" height="3" fill="#9ee09e"/><rect x="1280.6" y="569.5" width="2.2" height="3" fill="#9ee09e"/><rect x="1605.1" y="569.5" width="2.2" height="3" fill="#9ee09e"/><rect x="1280.6" y="610.5" width="2.2" height="3" fill="#9ee09e"/><rect x="1605.1" y="610.5" width="2.2" height="3" fill="#9ee09e"/><rect x="1280.6" y="641.5" width="2.2" height="3" fill="#9ee09e"/><rect x="1605.1" y="641.5" width="2.2" height="3" fill="#9ee09e"/><rect x="1280.6" y="678.5" width="2.2" height="3" fill="#9ee09e"/><rect x="1605.1" y="678.5" width="2.2" height="3" fill="#9ee09e"/><rect x="1280.6" y="714.5" width="2.2" height="3" fill="#9ee09e"/><rect x="1605.1" y="714.5" width="2.2" height="3" fill="#9ee09e"/><rect x="1280.6" y="748.5" width="2.2" height="3" fill="#9ee09e"/><rect x="1605.1" y="748.5" width="2.2" height="3" fill="#9ee09e"/><rect x="1280.6" y="788.5" width="2.2" height="3" fill="#9ee09e"/><rect x="1605.1" y="788.5" width="2.2" height="3" fill="#9ee09e"/><rect x="1280.6" y="808.5" width="2.2" height="3" fill="#9ee09e"/><rect x="1605.1" y="808.5" width="2.2" height="3" fill="#9ee09e"/><rect x="1275.5" y="463" width="11" height="4" rx="1" fill="#b0dcb0"/><rect x="1607.5" y="461" width="11" height="4" rx="1" fill="#b0dcb0"/><rect x="1270.5" y="825" width="11" height="4" rx="1" fill="#b0dcb0"/><rect x="1610.5" y="826.5" width="11" height="4" rx="1" fill="#b0dcb0"/><rect x="1426" y="464" width="9" height="3.5" fill="#eaeaea"/><path d="M1426 467.5H1437V470" stroke="#1fd11f" fill="none"/><rect x="1292" y="644" width="9" height="3" fill="#cfeacf"/><rect x="1587" y="644" width="9" height="3" fill="#cfeacf"/><rect x="1455" y="811.5" width="9" height="3" fill="#cfeacf"/><rect x="1456" y="842" width="10" height="3" fill="#eeeeee"/><path d="M1462 845.5H1474" stroke="#ddd" stroke-width="0.8"/><path d="M1289.6 470.5H1606.7 M1289.6 470.5V815.7 M1598.7 470.5V815.7 M1290 815.7H1599 M1294 475.6H1319.4 L1321 478.3 H1414.3 V593.1 H1297 V565.5 H1294 V548.3 H1298.2 V519.7 H1294 Z " stroke="#2ba6b8" stroke-width="1.3" fill="none"/><g stroke="#d8d8d8" stroke-width="1" fill="#3a3a3a"><circle cx="1302" cy="449.2" r="2.6"/><circle cx="1302" cy="834.3" r="2.6"/><circle cx="1337.7" cy="449.2" r="2.6"/><circle cx="1337.7" cy="834.3" r="2.6"/><circle cx="1373.5" cy="449.2" r="2.6"/><circle cx="1373.5" cy="834.3" r="2.6"/><circle cx="1409" cy="449.2" r="2.6"/><circle cx="1409" cy="834.3" r="2.6"/><circle cx="1444.6" cy="449.2" r="2.6"/><circle cx="1444.6" cy="834.3" r="2.6"/><circle cx="1480.3" cy="449.2" r="2.6"/><circle cx="1480.3" cy="834.3" r="2.6"/><circle cx="1516" cy="449.2" r="2.6"/><circle cx="1516" cy="834.3" r="2.6"/><circle cx="1551.6" cy="449.2" r="2.6"/><circle cx="1551.6" cy="834.3" r="2.6"/><circle cx="1587.3" cy="449.2" r="2.6"/><circle cx="1587.3" cy="834.3" r="2.6"/><circle cx="1268.7" cy="482.7" r="2.6"/><circle cx="1618.9" cy="482.7" r="2.6"/><circle cx="1268.7" cy="518.5" r="2.6"/><circle cx="1618.9" cy="518.5" r="2.6"/><circle cx="1268.7" cy="554.3" r="2.6"/><circle cx="1618.9" cy="554.3" r="2.6"/><circle cx="1268.7" cy="590.1" r="2.6"/><circle cx="1618.9" cy="590.1" r="2.6"/><circle cx="1268.7" cy="625.4" r="2.6"/><circle cx="1618.9" cy="625.4" r="2.6"/><circle cx="1268.7" cy="658.3" r="2.6"/><circle cx="1618.9" cy="658.3" r="2.6"/><circle cx="1268.7" cy="666.5" r="2.6"/><circle cx="1618.9" cy="666.5" r="2.6"/><circle cx="1268.7" cy="696.4" r="2.6"/><circle cx="1618.9" cy="696.4" r="2.6"/><circle cx="1268.7" cy="732.3" r="2.6"/><circle cx="1618.9" cy="732.3" r="2.6"/><circle cx="1268.7" cy="768" r="2.6"/><circle cx="1618.9" cy="768" r="2.6"/><circle cx="1268.7" cy="803.8" r="2.6"/><circle cx="1618.9" cy="803.8" r="2.6"/></g><g fill="none"><rect x="1436.1" y="474.5" width="17" height="16.4" stroke="#b8b8ac" stroke-width="1.4"/><rect x="1437.3" y="475.7" width="14.6" height="13.999999999999998" stroke="#a79f3c" stroke-width="1"/><path d="M1437.6 476.0L1451.6 489.4M1451.6 476.0L1437.6 489.4" stroke="#a79f3c" stroke-width="1.3"/><rect x="1471.8" y="474.5" width="17" height="16.4" stroke="#b8b8ac" stroke-width="1.4"/><rect x="1473.0" y="475.7" width="14.6" height="13.999999999999998" stroke="#a79f3c" stroke-width="1"/><path d="M1473.3 476.0L1487.3 489.4M1487.3 476.0L1473.3 489.4" stroke="#a79f3c" stroke-width="1.3"/><rect x="1507.5" y="474.5" width="17" height="16.4" stroke="#b8b8ac" stroke-width="1.4"/><rect x="1508.7" y="475.7" width="14.6" height="13.999999999999998" stroke="#a79f3c" stroke-width="1"/><path d="M1509.0 476.0L1523.0 489.4M1523.0 476.0L1509.0 489.4" stroke="#a79f3c" stroke-width="1.3"/><rect x="1542.3" y="473.7" width="18.6" height="18" stroke="#b8b8ac" stroke-width="1.4"/><rect x="1543.5" y="474.9" width="16.200000000000003" height="15.6" stroke="#a79f3c" stroke-width="1"/><path d="M1543.8 475.2L1559.3999999999999 490.2M1559.3999999999999 475.2L1543.8 490.2" stroke="#a79f3c" stroke-width="1.3"/><rect x="1579.05" y="474.7" width="16.5" height="16" stroke="#b8b8ac" stroke-width="1.4"/><rect x="1580.25" y="475.9" width="14.1" height="13.6" stroke="#a79f3c" stroke-width="1"/><path d="M1580.55 476.2L1594.05 489.2M1594.05 476.2L1580.55 489.2" stroke="#a79f3c" stroke-width="1.3"/><rect x="1434.6" y="508.8" width="20" height="19.4" stroke="#b8b8ac" stroke-width="1.4"/><rect x="1435.8" y="510.0" width="17.6" height="17.0" stroke="#a79f3c" stroke-width="1"/><path d="M1436.1 510.3L1453.1 526.7M1453.1 510.3L1436.1 526.7" stroke="#a79f3c" stroke-width="1.3"/><rect x="1470.3" y="508.8" width="20" height="19.4" stroke="#b8b8ac" stroke-width="1.4"/><rect x="1471.5" y="510.0" width="17.6" height="17.0" stroke="#a79f3c" stroke-width="1"/><path d="M1471.8 510.3L1488.8 526.7M1488.8 510.3L1471.8 526.7" stroke="#a79f3c" stroke-width="1.3"/><rect x="1506.0" y="508.8" width="20" height="19.4" stroke="#b8b8ac" stroke-width="1.4"/><rect x="1507.2" y="510.0" width="17.6" height="17.0" stroke="#a79f3c" stroke-width="1"/><path d="M1507.5 510.3L1524.5 526.7M1524.5 510.3L1507.5 526.7" stroke="#a79f3c" stroke-width="1.3"/><rect x="1541.1" y="495.40000000000003" width="21" height="33.6" stroke="#b8b8ac" stroke-width="1.4"/><rect x="1542.3" y="496.6" width="18.6" height="31.200000000000003" stroke="#a79f3c" stroke-width="1"/><path d="M1542.6 496.90000000000003L1551.6 504.40000000000003L1560.6 496.90000000000003M1542.6 527.5L1551.6 520.0L1560.6 527.5" stroke="#a79f3c" stroke-width="1.3"/><rect x="1578.6" y="496.95" width="17.4" height="29.5" stroke="#b8b8ac" stroke-width="1.4"/><rect x="1579.8" y="498.15" width="14.999999999999998" height="27.1" stroke="#a79f3c" stroke-width="1"/><path d="M1580.1 498.45L1587.3 505.95L1594.5 498.45M1580.1 524.95L1587.3 517.45L1594.5 524.95" stroke="#a79f3c" stroke-width="1.3"/><rect x="1434.6" y="544.8" width="20" height="19" stroke="#b8b8ac" stroke-width="1.4"/><rect x="1435.8" y="546.0" width="17.6" height="16.6" stroke="#a79f3c" stroke-width="1"/><path d="M1436.1 546.3L1453.1 562.3M1453.1 546.3L1436.1 562.3" stroke="#a79f3c" stroke-width="1.3"/><rect x="1470.3" y="544.8" width="20" height="19" stroke="#b8b8ac" stroke-width="1.4"/><rect x="1471.5" y="546.0" width="17.6" height="16.6" stroke="#a79f3c" stroke-width="1"/><path d="M1471.8 546.3L1488.8 562.3M1488.8 546.3L1471.8 562.3" stroke="#a79f3c" stroke-width="1.3"/><rect x="1506.0" y="544.8" width="20" height="19" stroke="#b8b8ac" stroke-width="1.4"/><rect x="1507.2" y="546.0" width="17.6" height="16.6" stroke="#a79f3c" stroke-width="1"/><path d="M1507.5 546.3L1524.5 562.3M1524.5 546.3L1507.5 562.3" stroke="#a79f3c" stroke-width="1.3"/><rect x="1541.6" y="544.8" width="20" height="19" stroke="#b8b8ac" stroke-width="1.4"/><rect x="1542.8" y="546.0" width="17.6" height="16.6" stroke="#a79f3c" stroke-width="1"/><path d="M1543.1 546.3L1560.1 562.3M1560.1 546.3L1543.1 562.3" stroke="#a79f3c" stroke-width="1.3"/><rect x="1579.05" y="546.3" width="16.5" height="16" stroke="#b8b8ac" stroke-width="1.4"/><rect x="1580.25" y="547.5" width="14.1" height="13.6" stroke="#a79f3c" stroke-width="1"/><path d="M1580.55 547.8L1594.05 560.8M1594.05 547.8L1580.55 560.8" stroke="#a79f3c" stroke-width="1.3"/><rect x="1434.6" y="580.6" width="20" height="19" stroke="#b8b8ac" stroke-width="1.4"/><rect x="1435.8" y="581.8000000000001" width="17.6" height="16.6" stroke="#a79f3c" stroke-width="1"/><path d="M1436.1 582.1L1453.1 598.1M1453.1 582.1L1436.1 598.1" stroke="#a79f3c" stroke-width="1.3"/><rect x="1470.3" y="580.6" width="20" height="19" stroke="#b8b8ac" stroke-width="1.4"/><rect x="1471.5" y="581.8000000000001" width="17.6" height="16.6" stroke="#a79f3c" stroke-width="1"/><path d="M1471.8 582.1L1488.8 598.1M1488.8 582.1L1471.8 598.1" stroke="#a79f3c" stroke-width="1.3"/><rect x="1506.0" y="580.6" width="20" height="19" stroke="#b8b8ac" stroke-width="1.4"/><rect x="1507.2" y="581.8000000000001" width="17.6" height="16.6" stroke="#a79f3c" stroke-width="1"/><path d="M1507.5 582.1L1524.5 598.1M1524.5 582.1L1507.5 598.1" stroke="#a79f3c" stroke-width="1.3"/><rect x="1541.6" y="580.6" width="20" height="19" stroke="#b8b8ac" stroke-width="1.4"/><rect x="1542.8" y="581.8000000000001" width="17.6" height="16.6" stroke="#a79f3c" stroke-width="1"/><path d="M1543.1 582.1L1560.1 598.1M1560.1 582.1L1543.1 598.1" stroke="#a79f3c" stroke-width="1.3"/><rect x="1579.05" y="582.1" width="16.5" height="16" stroke="#b8b8ac" stroke-width="1.4"/><rect x="1580.25" y="583.3000000000001" width="14.1" height="13.6" stroke="#a79f3c" stroke-width="1"/><path d="M1580.55 583.6L1594.05 596.6M1594.05 583.6L1580.55 596.6" stroke="#a79f3c" stroke-width="1.3"/><rect x="1293.5" y="617.0" width="17" height="16.8" stroke="#b8b8ac" stroke-width="1.4"/><rect x="1294.7" y="618.2" width="14.6" height="14.4" stroke="#a79f3c" stroke-width="1"/><path d="M1295.0 618.5L1309.0 632.3M1309.0 618.5L1295.0 632.3" stroke="#a79f3c" stroke-width="1.3"/><rect x="1327.5" y="615.65" width="20.4" height="19.5" stroke="#b8b8ac" stroke-width="1.4"/><rect x="1328.7" y="616.85" width="18.0" height="17.1" stroke="#a79f3c" stroke-width="1"/><path d="M1329.0 617.15L1346.4 633.65M1346.4 617.15L1329.0 633.65" stroke="#a79f3c" stroke-width="1.3"/><rect x="1363.3" y="615.65" width="20.4" height="19.5" stroke="#b8b8ac" stroke-width="1.4"/><rect x="1364.5" y="616.85" width="18.0" height="17.1" stroke="#a79f3c" stroke-width="1"/><path d="M1364.8 617.15L1382.2 633.65M1382.2 617.15L1364.8 633.65" stroke="#a79f3c" stroke-width="1.3"/><rect x="1398.8" y="615.65" width="20.4" height="19.5" stroke="#b8b8ac" stroke-width="1.4"/><rect x="1400.0" y="616.85" width="18.0" height="17.1" stroke="#a79f3c" stroke-width="1"/><path d="M1400.3 617.15L1417.7 633.65M1417.7 617.15L1400.3 633.65" stroke="#a79f3c" stroke-width="1.3"/><rect x="1434.3999999999999" y="615.65" width="20.4" height="19.5" stroke="#b8b8ac" stroke-width="1.4"/><rect x="1435.6" y="616.85" width="18.0" height="17.1" stroke="#a79f3c" stroke-width="1"/><path d="M1435.8999999999999 617.15L1453.3 633.65M1453.3 617.15L1435.8999999999999 633.65" stroke="#a79f3c" stroke-width="1.3"/><rect x="1470.1" y="615.65" width="20.4" height="19.5" stroke="#b8b8ac" stroke-width="1.4"/><rect x="1471.3" y="616.85" width="18.0" height="17.1" stroke="#a79f3c" stroke-width="1"/><path d="M1471.6 617.15L1489.0 633.65M1489.0 617.15L1471.6 633.65" stroke="#a79f3c" stroke-width="1.3"/><rect x="1505.8" y="615.65" width="20.4" height="19.5" stroke="#b8b8ac" stroke-width="1.4"/><rect x="1507.0" y="616.85" width="18.0" height="17.1" stroke="#a79f3c" stroke-width="1"/><path d="M1507.3 617.15L1524.7 633.65M1524.7 617.15L1507.3 633.65" stroke="#a79f3c" stroke-width="1.3"/><rect x="1541.3999999999999" y="615.65" width="20.4" height="19.5" stroke="#b8b8ac" stroke-width="1.4"/><rect x="1542.6" y="616.85" width="18.0" height="17.1" stroke="#a79f3c" stroke-width="1"/><path d="M1542.8999999999999 617.15L1560.3 633.65M1560.3 617.15L1542.8999999999999 633.65" stroke="#a79f3c" stroke-width="1.3"/><rect x="1578.8" y="617.0" width="17" height="16.8" stroke="#b8b8ac" stroke-width="1.4"/><rect x="1580.0" y="618.2" width="14.6" height="14.4" stroke="#a79f3c" stroke-width="1"/><path d="M1580.3 618.5L1594.3 632.3M1594.3 618.5L1580.3 632.3" stroke="#a79f3c" stroke-width="1.3"/><rect x="1293.5" y="652.8" width="17" height="19" stroke="#b8b8ac" stroke-width="1.4"/><rect x="1294.7" y="654.0" width="14.6" height="16.6" stroke="#a79f3c" stroke-width="1"/><path d="M1295.0 654.3L1309.0 670.3M1309.0 654.3L1295.0 670.3" stroke="#a79f3c" stroke-width="1.3"/><rect x="1327.5" y="652.55" width="20.4" height="19.5" stroke="#b8b8ac" stroke-width="1.4"/><rect x="1328.7" y="653.75" width="18.0" height="17.1" stroke="#a79f3c" stroke-width="1"/><path d="M1329.0 654.05L1346.4 670.55M1346.4 654.05L1329.0 670.55" stroke="#a79f3c" stroke-width="1.3"/><rect x="1363.3" y="652.55" width="20.4" height="19.5" stroke="#b8b8ac" stroke-width="1.4"/><rect x="1364.5" y="653.75" width="18.0" height="17.1" stroke="#a79f3c" stroke-width="1"/><path d="M1364.8 654.05L1382.2 670.55M1382.2 654.05L1364.8 670.55" stroke="#a79f3c" stroke-width="1.3"/><rect x="1398.8" y="652.55" width="20.4" height="19.5" stroke="#b8b8ac" stroke-width="1.4"/><rect x="1400.0" y="653.75" width="18.0" height="17.1" stroke="#a79f3c" stroke-width="1"/><path d="M1400.3 654.05L1417.7 670.55M1417.7 654.05L1400.3 670.55" stroke="#a79f3c" stroke-width="1.3"/><rect x="1434.3999999999999" y="652.55" width="20.4" height="19.5" stroke="#b8b8ac" stroke-width="1.4"/><rect x="1435.6" y="653.75" width="18.0" height="17.1" stroke="#a79f3c" stroke-width="1"/><path d="M1435.8999999999999 654.05L1453.3 670.55M1453.3 654.05L1435.8999999999999 670.55" stroke="#a79f3c" stroke-width="1.3"/><rect x="1470.1" y="652.55" width="20.4" height="19.5" stroke="#b8b8ac" stroke-width="1.4"/><rect x="1471.3" y="653.75" width="18.0" height="17.1" stroke="#a79f3c" stroke-width="1"/><path d="M1471.6 654.05L1489.0 670.55M1489.0 654.05L1471.6 670.55" stroke="#a79f3c" stroke-width="1.3"/><rect x="1505.8" y="652.55" width="20.4" height="19.5" stroke="#b8b8ac" stroke-width="1.4"/><rect x="1507.0" y="653.75" width="18.0" height="17.1" stroke="#a79f3c" stroke-width="1"/><path d="M1507.3 654.05L1524.7 670.55M1524.7 654.05L1507.3 670.55" stroke="#a79f3c" stroke-width="1.3"/><rect x="1541.3999999999999" y="652.55" width="20.4" height="19.5" stroke="#b8b8ac" stroke-width="1.4"/><rect x="1542.6" y="653.75" width="18.0" height="17.1" stroke="#a79f3c" stroke-width="1"/><path d="M1542.8999999999999 654.05L1560.3 670.55M1560.3 654.05L1542.8999999999999 670.55" stroke="#a79f3c" stroke-width="1.3"/><rect x="1578.8" y="652.8" width="17" height="19" stroke="#b8b8ac" stroke-width="1.4"/><rect x="1580.0" y="654.0" width="14.6" height="16.6" stroke="#a79f3c" stroke-width="1"/><path d="M1580.3 654.3L1594.3 670.3M1594.3 654.3L1580.3 670.3" stroke="#a79f3c" stroke-width="1.3"/><rect x="1293.5" y="688.0" width="17" height="16.8" stroke="#b8b8ac" stroke-width="1.4"/><rect x="1294.7" y="689.2" width="14.6" height="14.4" stroke="#a79f3c" stroke-width="1"/><path d="M1295.0 689.5L1309.0 703.3M1309.0 689.5L1295.0 703.3" stroke="#a79f3c" stroke-width="1.3"/><rect x="1327.5" y="686.65" width="20.4" height="19.5" stroke="#b8b8ac" stroke-width="1.4"/><rect x="1328.7" y="687.85" width="18.0" height="17.1" stroke="#a79f3c" stroke-width="1"/><path d="M1329.0 688.15L1346.4 704.65M1346.4 688.15L1329.0 704.65" stroke="#a79f3c" stroke-width="1.3"/><rect x="1363.3" y="686.65" width="20.4" height="19.5" stroke="#b8b8ac" stroke-width="1.4"/><rect x="1364.5" y="687.85" width="18.0" height="17.1" stroke="#a79f3c" stroke-width="1"/><path d="M1364.8 688.15L1382.2 704.65M1382.2 688.15L1364.8 704.65" stroke="#a79f3c" stroke-width="1.3"/><rect x="1398.8" y="686.65" width="20.4" height="19.5" stroke="#b8b8ac" stroke-width="1.4"/><rect x="1400.0" y="687.85" width="18.0" height="17.1" stroke="#a79f3c" stroke-width="1"/><path d="M1400.3 688.15L1417.7 704.65M1417.7 688.15L1400.3 704.65" stroke="#a79f3c" stroke-width="1.3"/><rect x="1434.3999999999999" y="686.65" width="20.4" height="19.5" stroke="#b8b8ac" stroke-width="1.4"/><rect x="1435.6" y="687.85" width="18.0" height="17.1" stroke="#a79f3c" stroke-width="1"/><path d="M1435.8999999999999 688.15L1453.3 704.65M1453.3 688.15L1435.8999999999999 704.65" stroke="#a79f3c" stroke-width="1.3"/><rect x="1470.1" y="686.65" width="20.4" height="19.5" stroke="#b8b8ac" stroke-width="1.4"/><rect x="1471.3" y="687.85" width="18.0" height="17.1" stroke="#a79f3c" stroke-width="1"/><path d="M1471.6 688.15L1489.0 704.65M1489.0 688.15L1471.6 704.65" stroke="#a79f3c" stroke-width="1.3"/><rect x="1505.8" y="686.65" width="20.4" height="19.5" stroke="#b8b8ac" stroke-width="1.4"/><rect x="1507.0" y="687.85" width="18.0" height="17.1" stroke="#a79f3c" stroke-width="1"/><path d="M1507.3 688.15L1524.7 704.65M1524.7 688.15L1507.3 704.65" stroke="#a79f3c" stroke-width="1.3"/><rect x="1541.3999999999999" y="686.65" width="20.4" height="19.5" stroke="#b8b8ac" stroke-width="1.4"/><rect x="1542.6" y="687.85" width="18.0" height="17.1" stroke="#a79f3c" stroke-width="1"/><path d="M1542.8999999999999 688.15L1560.3 704.65M1560.3 688.15L1542.8999999999999 704.65" stroke="#a79f3c" stroke-width="1.3"/><rect x="1578.8" y="688.0" width="17" height="16.8" stroke="#b8b8ac" stroke-width="1.4"/><rect x="1580.0" y="689.2" width="14.6" height="14.4" stroke="#a79f3c" stroke-width="1"/><path d="M1580.3 689.5L1594.3 703.3M1594.3 689.5L1580.3 703.3" stroke="#a79f3c" stroke-width="1.3"/><rect x="1293.5" y="723.9" width="17" height="16.8" stroke="#b8b8ac" stroke-width="1.4"/><rect x="1294.7" y="725.1" width="14.6" height="14.4" stroke="#a79f3c" stroke-width="1"/><path d="M1295.0 725.4L1309.0 739.1999999999999M1309.0 725.4L1295.0 739.1999999999999" stroke="#a79f3c" stroke-width="1.3"/><rect x="1327.5" y="722.55" width="20.4" height="19.5" stroke="#b8b8ac" stroke-width="1.4"/><rect x="1328.7" y="723.75" width="18.0" height="17.1" stroke="#a79f3c" stroke-width="1"/><path d="M1329.0 724.05L1346.4 740.55M1346.4 724.05L1329.0 740.55" stroke="#a79f3c" stroke-width="1.3"/><rect x="1363.3" y="722.55" width="20.4" height="19.5" stroke="#b8b8ac" stroke-width="1.4"/><rect x="1364.5" y="723.75" width="18.0" height="17.1" stroke="#a79f3c" stroke-width="1"/><path d="M1364.8 724.05L1382.2 740.55M1382.2 724.05L1364.8 740.55" stroke="#a79f3c" stroke-width="1.3"/><rect x="1398.8" y="722.55" width="20.4" height="19.5" stroke="#b8b8ac" stroke-width="1.4"/><rect x="1400.0" y="723.75" width="18.0" height="17.1" stroke="#a79f3c" stroke-width="1"/><path d="M1400.3 724.05L1417.7 740.55M1417.7 724.05L1400.3 740.55" stroke="#a79f3c" stroke-width="1.3"/><rect x="1434.3999999999999" y="722.55" width="20.4" height="19.5" stroke="#b8b8ac" stroke-width="1.4"/><rect x="1435.6" y="723.75" width="18.0" height="17.1" stroke="#a79f3c" stroke-width="1"/><path d="M1435.8999999999999 724.05L1453.3 740.55M1453.3 724.05L1435.8999999999999 740.55" stroke="#a79f3c" stroke-width="1.3"/><rect x="1470.1" y="722.55" width="20.4" height="19.5" stroke="#b8b8ac" stroke-width="1.4"/><rect x="1471.3" y="723.75" width="18.0" height="17.1" stroke="#a79f3c" stroke-width="1"/><path d="M1471.6 724.05L1489.0 740.55M1489.0 724.05L1471.6 740.55" stroke="#a79f3c" stroke-width="1.3"/><rect x="1505.8" y="722.55" width="20.4" height="19.5" stroke="#b8b8ac" stroke-width="1.4"/><rect x="1507.0" y="723.75" width="18.0" height="17.1" stroke="#a79f3c" stroke-width="1"/><path d="M1507.3 724.05L1524.7 740.55M1524.7 724.05L1507.3 740.55" stroke="#a79f3c" stroke-width="1.3"/><rect x="1541.3999999999999" y="722.55" width="20.4" height="19.5" stroke="#b8b8ac" stroke-width="1.4"/><rect x="1542.6" y="723.75" width="18.0" height="17.1" stroke="#a79f3c" stroke-width="1"/><path d="M1542.8999999999999 724.05L1560.3 740.55M1560.3 724.05L1542.8999999999999 740.55" stroke="#a79f3c" stroke-width="1.3"/><rect x="1578.8" y="723.9" width="17" height="16.8" stroke="#b8b8ac" stroke-width="1.4"/><rect x="1580.0" y="725.1" width="14.6" height="14.4" stroke="#a79f3c" stroke-width="1"/><path d="M1580.3 725.4L1594.3 739.1999999999999M1594.3 725.4L1580.3 739.1999999999999" stroke="#a79f3c" stroke-width="1.3"/><rect x="1293.5" y="760.3" width="17" height="29.4" stroke="#b8b8ac" stroke-width="1.4"/><rect x="1294.7" y="761.5" width="14.6" height="27.0" stroke="#a79f3c" stroke-width="1"/><rect x="1300.5" y="765.7" width="3" height="17.6" fill="#a79f3c"/><rect x="1327.5" y="758.0" width="20.4" height="32.8" stroke="#b8b8ac" stroke-width="1.4"/><rect x="1328.7" y="759.2" width="18.0" height="30.4" stroke="#a79f3c" stroke-width="1"/><path d="M1329.0 789.3L1337.7 781.8L1346.4 789.3" stroke="#a79f3c" stroke-width="1.3"/><rect x="1363.3" y="758.25" width="20.4" height="19.5" stroke="#b8b8ac" stroke-width="1.4"/><rect x="1364.5" y="759.45" width="18.0" height="17.1" stroke="#a79f3c" stroke-width="1"/><path d="M1364.8 759.75L1382.2 776.25M1382.2 759.75L1364.8 776.25" stroke="#a79f3c" stroke-width="1.3"/><rect x="1398.8" y="758.25" width="20.4" height="19.5" stroke="#b8b8ac" stroke-width="1.4"/><rect x="1400.0" y="759.45" width="18.0" height="17.1" stroke="#a79f3c" stroke-width="1"/><path d="M1400.3 759.75L1417.7 776.25M1417.7 759.75L1400.3 776.25" stroke="#a79f3c" stroke-width="1.3"/><rect x="1434.3999999999999" y="758.25" width="20.4" height="19.5" stroke="#b8b8ac" stroke-width="1.4"/><rect x="1435.6" y="759.45" width="18.0" height="17.1" stroke="#a79f3c" stroke-width="1"/><path d="M1435.8999999999999 759.75L1453.3 776.25M1453.3 759.75L1435.8999999999999 776.25" stroke="#a79f3c" stroke-width="1.3"/><rect x="1470.1" y="758.25" width="20.4" height="19.5" stroke="#b8b8ac" stroke-width="1.4"/><rect x="1471.3" y="759.45" width="18.0" height="17.1" stroke="#a79f3c" stroke-width="1"/><path d="M1471.6 759.75L1489.0 776.25M1489.0 759.75L1471.6 776.25" stroke="#a79f3c" stroke-width="1.3"/><rect x="1505.8" y="758.25" width="20.4" height="19.5" stroke="#b8b8ac" stroke-width="1.4"/><rect x="1507.0" y="759.45" width="18.0" height="17.1" stroke="#a79f3c" stroke-width="1"/><path d="M1507.3 759.75L1524.7 776.25M1524.7 759.75L1507.3 776.25" stroke="#a79f3c" stroke-width="1.3"/><rect x="1541.3999999999999" y="758.25" width="20.4" height="19.5" stroke="#b8b8ac" stroke-width="1.4"/><rect x="1542.6" y="759.45" width="18.0" height="17.1" stroke="#a79f3c" stroke-width="1"/><path d="M1542.8999999999999 759.75L1560.3 776.25M1560.3 759.75L1542.8999999999999 776.25" stroke="#a79f3c" stroke-width="1.3"/><rect x="1565.8" y="760.3" width="29.9" height="16" stroke="#c8c8c0" stroke-width="1.6"/><rect x="1567" y="761.5" width="27.5" height="13.6" stroke="#a79f3c" stroke-width="1"/><path d="M1567 761.5L1573 766M1567 775L1573 770.5M1594.5 761.5L1589 766M1594.5 775L1589 770.5" stroke="#a79f3c" stroke-width="1.2"/><rect x="1572.2" y="766.2" width="17" height="4" rx="2" stroke="#f0f0f0" stroke-width="1.4"/><rect x="1293.5" y="795.5" width="17" height="16.6" stroke="#b8b8ac" stroke-width="1.4"/><rect x="1294.7" y="796.7" width="14.6" height="14.200000000000001" stroke="#a79f3c" stroke-width="1"/><path d="M1295.0 797.0L1309.0 810.6M1309.0 797.0L1295.0 810.6" stroke="#a79f3c" stroke-width="1.3"/><rect x="1328.5" y="795.0" width="18.4" height="17.6" stroke="#b8b8ac" stroke-width="1.4"/><rect x="1329.7" y="796.2" width="15.999999999999998" height="15.200000000000001" stroke="#a79f3c" stroke-width="1"/><path d="M1330.0 796.5L1345.4 811.1M1345.4 796.5L1330.0 811.1" stroke="#a79f3c" stroke-width="1.3"/><rect x="1365.0" y="795.5" width="17" height="16.6" stroke="#b8b8ac" stroke-width="1.4"/><rect x="1366.2" y="796.7" width="14.6" height="14.200000000000001" stroke="#a79f3c" stroke-width="1"/><path d="M1366.5 797.0L1380.5 810.6M1380.5 797.0L1366.5 810.6" stroke="#a79f3c" stroke-width="1.3"/><rect x="1400.5" y="795.5" width="17" height="16.6" stroke="#b8b8ac" stroke-width="1.4"/><rect x="1401.7" y="796.7" width="14.6" height="14.200000000000001" stroke="#a79f3c" stroke-width="1"/><path d="M1402.0 797.0L1416.0 810.6M1416.0 797.0L1402.0 810.6" stroke="#a79f3c" stroke-width="1.3"/><rect x="1436.1" y="795.5" width="17" height="16.6" stroke="#b8b8ac" stroke-width="1.4"/><rect x="1437.3" y="796.7" width="14.6" height="14.200000000000001" stroke="#a79f3c" stroke-width="1"/><path d="M1437.6 797.0L1451.6 810.6M1451.6 797.0L1437.6 810.6" stroke="#a79f3c" stroke-width="1.3"/><rect x="1471.8" y="795.5" width="17" height="16.6" stroke="#b8b8ac" stroke-width="1.4"/><rect x="1473.0" y="796.7" width="14.6" height="14.200000000000001" stroke="#a79f3c" stroke-width="1"/><path d="M1473.3 797.0L1487.3 810.6M1487.3 797.0L1473.3 810.6" stroke="#a79f3c" stroke-width="1.3"/><rect x="1507.5" y="795.5" width="17" height="16.6" stroke="#b8b8ac" stroke-width="1.4"/><rect x="1508.7" y="796.7" width="14.6" height="14.200000000000001" stroke="#a79f3c" stroke-width="1"/><path d="M1509.0 797.0L1523.0 810.6M1523.0 797.0L1509.0 810.6" stroke="#a79f3c" stroke-width="1.3"/><rect x="1543.1" y="795.5" width="17" height="16.6" stroke="#b8b8ac" stroke-width="1.4"/><rect x="1544.3" y="796.7" width="14.6" height="14.200000000000001" stroke="#a79f3c" stroke-width="1"/><path d="M1544.6 797.0L1558.6 810.6M1558.6 797.0L1544.6 810.6" stroke="#a79f3c" stroke-width="1.3"/><rect x="1566.3" y="796.2" width="14" height="14.6" stroke="#b8b8ac" stroke-width="1.4"/><rect x="1567.5" y="797.4000000000001" width="11.6" height="12.2" stroke="#a79f3c" stroke-width="1"/><path d="M1567.8 797.7L1578.8 809.3000000000001M1578.8 797.7L1567.8 809.3000000000001" stroke="#a79f3c" stroke-width="1.3"/><rect x="1580.3999999999999" y="796.2" width="13.4" height="14.6" stroke="#b8b8ac" stroke-width="1.4"/><rect x="1581.6" y="797.4000000000001" width="11.0" height="12.2" stroke="#a79f3c" stroke-width="1"/><path d="M1581.8999999999999 797.7L1592.3 809.3000000000001M1592.3 797.7L1581.8999999999999 809.3000000000001" stroke="#a79f3c" stroke-width="1.3"/><rect x="1309.6" y="513" width="12.2" height="11.6" stroke="#c9bf3a" stroke-width="1.5"/><rect x="1366.3" y="511.8" width="14.4" height="13.8" stroke="#c9bf3a" stroke-width="1.5"/><rect x="1366.3" y="547.4" width="14.4" height="14" stroke="#c9bf3a" stroke-width="1.5"/><path d="M1342 520 Q1339 521 1339 524 V538 M1342 540 Q1339 541 1339 544 V556 H1342" stroke="#e6e6f0" stroke-width="1.4"/></g><path d="M1286.3 894H1294" stroke="#f4f4f4" stroke-width="1.7" stroke-dasharray="9 0.8 6 0.8 12 0.8"/><path d="M1286.3 897H1343" stroke="#f4f4f4" stroke-width="1.7" stroke-dasharray="9 0.8 6 0.8 12 0.8"/><path d="M1289.3 899.8H1338.8" stroke="#eeeeee" stroke-width="1.7" stroke-dasharray="9 0.8 6 0.8 12 0.8"/><path d="M1286.3 902.6H1325.2" stroke="#c81ed0" stroke-width="2.6" stroke-dasharray="9 0.8 6 0.8 12 0.8"/><path d="M1286.3 905.8H1337.9" stroke="#f4f4f4" stroke-width="1.7" stroke-dasharray="9 0.8 6 0.8 12 0.8"/><path d="M1290 909H1340" stroke="#f0f0f0" stroke-width="1.7" stroke-dasharray="9 0.8 6 0.8 12 0.8"/><path d="M1290 911.7H1325.7" stroke="#f0f0f0" stroke-width="1.7" stroke-dasharray="9 0.8 6 0.8 12 0.8"/><path d="M1286.3 915.8H1333.8" stroke="#f0f0f0" stroke-width="1.7" stroke-dasharray="9 0.8 6 0.8 12 0.8"/><path d="M1286.3 918.7H1332.7" stroke="#f0f0f0" stroke-width="1.7" stroke-dasharray="9 0.8 6 0.8 12 0.8"/><path d="M1290 921.6H1314.8" stroke="#e8e8e8" stroke-width="1.7" stroke-dasharray="9 0.8 6 0.8 12 0.8"/><path d="M1286.3 924.3H1336.5" stroke="#f0f0f0" stroke-width="1.7" stroke-dasharray="9 0.8 6 0.8 12 0.8"/><path d="M1286.3 927.5H1335.4" stroke="#f0f0f0" stroke-width="1.7" stroke-dasharray="9 0.8 6 0.8 12 0.8"/><rect x="1542.5" y="949.5" width="94" height="21.5" fill="#000" stroke="#20a8b0" stroke-width="1.5"/><rect x="1544" y="956" width="91" height="13.5" fill="#22062a"/><path d="M1594 951.5H1636 M1594 954.5H1636" stroke="#b010c0" stroke-width="1"/><path d="M1544 956.5H1635" stroke="#c818d0" stroke-width="0.9"/><path d="M1544 959.5H1635" stroke="#c818d0" stroke-width="0.9"/><path d="M1544 962.5H1635" stroke="#c818d0" stroke-width="0.9"/><path d="M1544 965.5H1635" stroke="#c818d0" stroke-width="0.9"/><path d="M1544 968.8H1635" stroke="#c818d0" stroke-width="0.9"/><path d="M1548 956V969.5" stroke="#c010c8" stroke-width="1.4" stroke-dasharray="2 1"/><path d="M1553 956V969.5" stroke="#c010c8" stroke-width="1.4" stroke-dasharray="2 1"/><path d="M1558 956V969.5" stroke="#c010c8" stroke-width="1.4" stroke-dasharray="2 1"/><path d="M1563 956V969.5" stroke="#c010c8" stroke-width="1.4" stroke-dasharray="2 1"/><path d="M1568 956V969.5" stroke="#c010c8" stroke-width="1.4" stroke-dasharray="2 1"/><path d="M1573 956V969.5" stroke="#c010c8" stroke-width="1.4" stroke-dasharray="2 1"/><path d="M1578 956V969.5" stroke="#c010c8" stroke-width="1.4" stroke-dasharray="2 1"/><path d="M1583 956V969.5" stroke="#c010c8" stroke-width="1.4" stroke-dasharray="2 1"/><path d="M1622 956V969.5" stroke="#c010c8" stroke-width="1.4" stroke-dasharray="2 1"/><path d="M1627 956V969.5" stroke="#c010c8" stroke-width="1.4" stroke-dasharray="2 1"/><path d="M1632 956V969.5" stroke="#c010c8" stroke-width="1.4" stroke-dasharray="2 1"/><rect x="1623" y="957" width="5" height="12" fill="#ff1cff"/><rect x="1589.3" y="957.9" width="30.6" height="9.4" rx="1" fill="#000" stroke="#a010a8" stroke-width="0.8"/><rect x="1599" y="961.5" width="8" height="3.5" rx="1.5" fill="#fff"/><rect x="1556" y="952" width="17" height="2.5" fill="#999"/></svg>
<div class="a" style="left:38px;top:1041px;width:1919px;height:27px;background:#292c34;"></div>
<div class="a" style="left:305px;top:1041px;width:1652px;height:1.5px;background:#3a3d45;"></div>
<div class="a" style="left:38px;top:1042px;width:51px;height:25px;background:#5a5d64;border-radius:0 6px 6px 0"></div>
<div class="t" style="left:-87px;width:300px;text-align:center;top:1047.0px;line-height:16px;font-size:12px;color:#e8e8ea;"><span class="cj" style="letter-spacing:3px">模型</span></div>
<div class="t" style="left:99px;top:1047.0px;line-height:16px;font-size:12px;color:#e8e8ea;">Layout1</div>
<div class="a" style="left:153px;top:1042px;width:1px;height:25px;background:#25272e;"></div>
<svg style="left:170px;top:1047px" width="16" height="16" viewBox="0 0 16 16" stroke="#dcdcdc" stroke-width="1.3"><path d="M8 0.5 V15.5 M0.5 8 H15.5"/></svg>
<svg style="left:1560px;top:1042px" width="180" height="25" viewBox="1560 1042 180 25" fill="none" stroke="#d6d6d6" stroke-width="1.4" stroke-linecap="round" stroke-linejoin="round">
<path d="M1566.5 1046 V1064 H1584"/><rect x="1567.5" y="1059.5" width="3" height="3" stroke="#3d9ef5" stroke-width="1"/>
<rect x="1592" y="1044" width="23" height="23" rx="4" fill="#2c7be5" stroke="none"/>
<path d="M1596 1063 L1607 1049 M1596 1063 H1610 M1603 1055 Q1606 1058 1605 1063" stroke="#e6f0ff"/>
<path d="M1617 1054 H1623 L1620 1058Z" fill="#d6d6d6" stroke="none"/>
<g fill="#d6d6d6" stroke="none"><rect x="1632" y="1046" width="2.5" height="2.5"/><rect x="1639" y="1046" width="2.5" height="2.5"/><rect x="1646" y="1046" width="2.5" height="2.5"/><rect x="1632" y="1053" width="2.5" height="2.5"/><rect x="1639" y="1053" width="2.5" height="2.5"/><rect x="1646" y="1053" width="2.5" height="2.5"/><rect x="1632" y="1060" width="2.5" height="2.5"/><rect x="1639" y="1060" width="2.5" height="2.5"/><rect x="1646" y="1060" width="2.5" height="2.5"/></g>
<path d="M1654 1054 H1660 L1657 1058Z" fill="#d6d6d6" stroke="none"/>
<path d="M1684 1056 V1063 Q1684 1064.5 1682.5 1064.5 H1672.5 Q1671 1064.5 1671 1063 V1052 Q1671 1050.5 1672.5 1050.5 H1679"/>
<rect x="1683" y="1046" width="5.5" height="5.5" rx="1" stroke="#3d9ef5"/>
<path d="M1692 1054 H1698 L1695 1058Z" fill="#d6d6d6" stroke="none"/>
<rect x="1706" y="1044" width="23" height="23" rx="4" fill="#2c7be5" stroke="none"/>
<path d="M1709.5 1049.5 H1725.5" stroke="#f0f4fa" stroke-width="2"/><path d="M1709.5 1055 H1725.5" stroke="#f0f4fa" stroke-width="2.6"/><path d="M1709.5 1061 H1725.5" stroke="#f0f4fa" stroke-width="3.4"/>
</svg>
<div class="t" style="left:1752px;top:1047.0px;line-height:16px;font-size:12px;color:#e0e0e2;">1:1</div>
<div class="t" style="left:1791px;top:1047.0px;line-height:16px;font-size:12px;color:#e0e0e2;">517281, 3.5528e+06</div></body></html>
